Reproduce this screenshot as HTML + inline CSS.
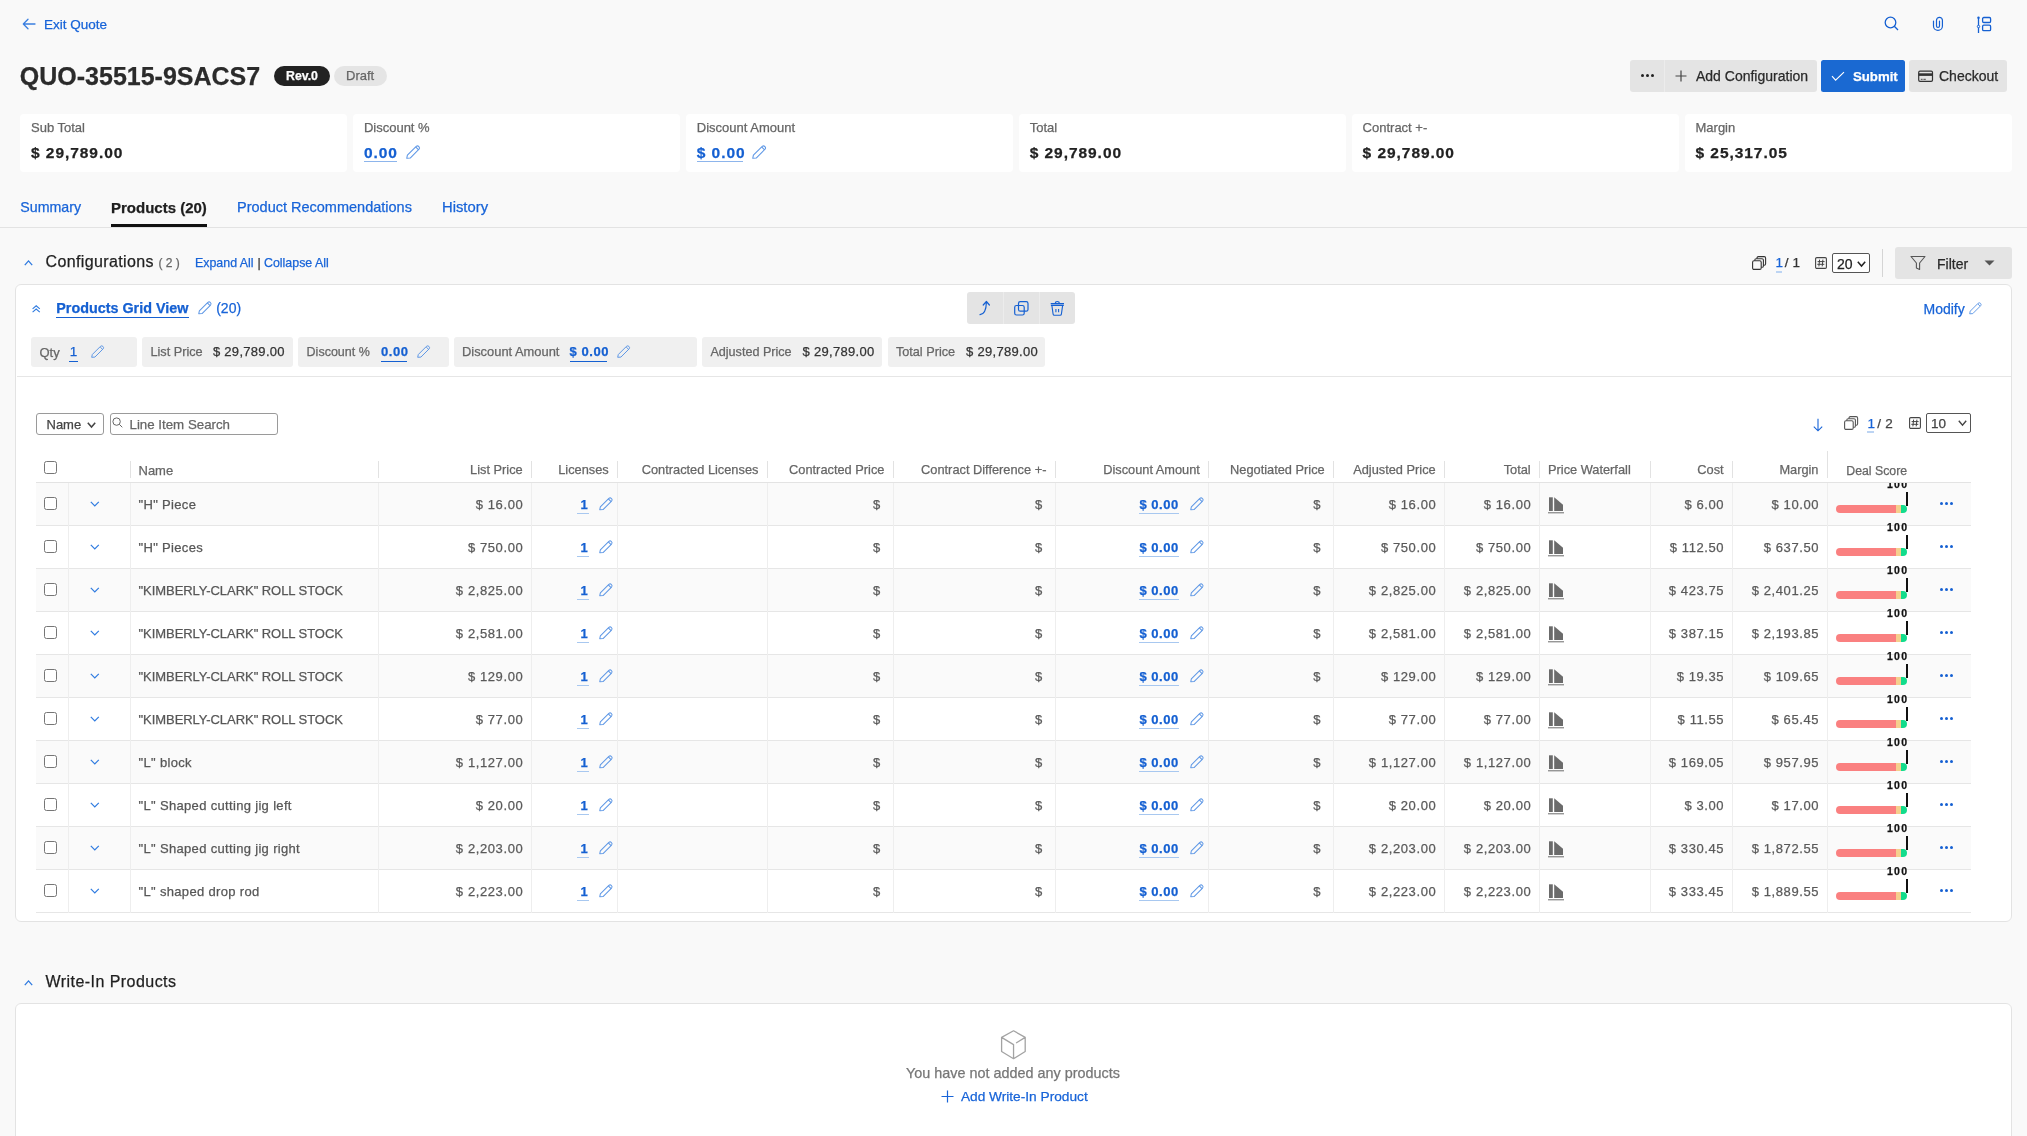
<!DOCTYPE html><html><head><meta charset="utf-8"><style>
html,body{margin:0;padding:0;}
body{width:2027px;height:1136px;overflow:hidden;background:#f9f9f9;position:relative;font-family:"Liberation Sans",sans-serif;}
.t{position:absolute;white-space:pre;line-height:1;-webkit-text-stroke:0.25px currentColor;}
#root{position:absolute;left:0;top:0;width:2027px;height:1136px;overflow:hidden;will-change:transform;}
.r{position:absolute;}
.i{position:absolute;overflow:visible;}
</style></head><body><div id="root">
<svg class="i" style="left:22.00px;top:18.00px;" width="14" height="12" viewBox="0 0 14 12"><path d="M13 6 H1.5 M6 1.3 L1.3 6 L6 10.7" fill="none" stroke="#3a7fe0" stroke-width="1.3" stroke-linecap="round" stroke-linejoin="round"/></svg>
<div class="t" style="left:44.00px;top:17.57px;font-size:13.5px;color:#1864d8;font-weight:400;">Exit Quote</div>
<svg class="i" style="left:1884.00px;top:16.00px;" width="16" height="16" viewBox="0 0 16 16"><circle cx="6.5" cy="6.5" r="5.3" fill="none" stroke="#1560d2" stroke-width="1.3"/><line x1="10.3" y1="10.3" x2="14" y2="14" stroke="#1560d2" stroke-width="1.3"/></svg>
<svg class="i" style="left:1928.00px;top:13.00px;" width="22" height="22" viewBox="0 0 22 22"><path d="M5.5 8.1 V12.95 A4.46 4.46 0 0 0 14.42 12.95 V7.3 A2.96 2.96 0 0 0 8.5 7.3 V12.9 A1.5 1.5 0 0 0 11.5 12.9 V8.1" fill="none" stroke="#1560d2" stroke-width="1.2" stroke-linecap="round"/></svg>
<svg class="i" style="left:1975.00px;top:16.00px;" width="18" height="18" viewBox="0 0 18 18"><line x1="3.5" y1="1.5" x2="3.5" y2="17" stroke="#1560d2" stroke-width="1.3"/><circle cx="3.5" cy="1.8" r="1.2" fill="#1560d2"/><circle cx="3.5" cy="10.5" r="1.2" fill="#f9f9f9" stroke="#1560d2" stroke-width="1"/><rect x="7.6" y="1.5" width="8" height="5" rx="1.2" fill="none" stroke="#1560d2" stroke-width="1.3"/><rect x="7.6" y="9.2" width="8" height="5.4" rx="1.2" fill="none" stroke="#1560d2" stroke-width="1.3"/></svg>
<div class="t" style="left:19.80px;top:64.34px;font-size:25px;color:#2b2b2b;font-weight:700;">QUO-35515-9SACS7</div>
<div class="r" style="left:274.00px;top:66.00px;width:56.00px;height:20.00px;background:#222;border-radius:10px"></div>
<div class="t" style="left:302.00px;top:69.99px;font-size:12.3px;color:#fff;font-weight:700;transform:translateX(-50%)">Rev.0</div>
<div class="r" style="left:334.00px;top:66.00px;width:53.00px;height:20.00px;background:#e5e5e5;border-radius:10px"></div>
<div class="t" style="left:346.00px;top:68.60px;font-size:13px;color:#666;font-weight:400;">Draft</div>
<div class="r" style="left:1630.30px;top:60.30px;width:186.50px;height:31.40px;background:#e4e4e4;border-radius:3px"></div>
<div class="r" style="left:1663.60px;top:60.30px;width:0.60px;height:31.40px;background:#ececec"></div>
<div class="r" style="left:1640.50px;top:74.30px;width:3.00px;height:3.00px;background:#222;border-radius:50%"></div>
<div class="r" style="left:1645.50px;top:74.30px;width:3.00px;height:3.00px;background:#222;border-radius:50%"></div>
<div class="r" style="left:1650.50px;top:74.30px;width:3.00px;height:3.00px;background:#222;border-radius:50%"></div>
<svg class="i" style="left:1675.00px;top:69.80px;" width="12" height="12" viewBox="0 0 12 12"><path d="M6 0.5 V11.5 M0.5 6 H11.5" stroke="#444" stroke-width="1.2"/></svg>
<div class="t" style="left:1696.00px;top:68.75px;font-size:14px;color:#2a2a2a;font-weight:400;">Add Configuration</div>
<div class="r" style="left:1821.30px;top:60.30px;width:83.50px;height:31.40px;background:#1a69d2;border-radius:2.5px"></div>
<svg class="i" style="left:1831.00px;top:71.00px;" width="14" height="11" viewBox="0 0 14 11"><polyline points="1,5.2 4.6,9.2 13,1.2" fill="none" stroke="#fff" stroke-width="1.15"/></svg>
<div class="t" style="left:1853.00px;top:69.83px;font-size:13.2px;color:#fff;font-weight:700;">Submit</div>
<div class="r" style="left:1909.00px;top:60.30px;width:97.80px;height:31.40px;background:#e4e4e4;border-radius:3px"></div>
<svg class="i" style="left:1917.00px;top:70.00px;" width="17" height="13" viewBox="0 0 17 13"><rect x="1.7" y="1.2" width="13.8" height="10.2" rx="1.3" fill="none" stroke="#333" stroke-width="1.2"/><rect x="1.7" y="3.3" width="13.8" height="2.6" fill="#333"/><line x1="3.8" y1="9.3" x2="5.6" y2="9.3" stroke="#333" stroke-width="0.9"/><line x1="6.4" y1="9.3" x2="8.8" y2="9.3" stroke="#333" stroke-width="0.9"/></svg>
<div class="t" style="left:1939.00px;top:68.75px;font-size:14px;color:#2a2a2a;font-weight:400;">Checkout</div>
<div class="r" style="left:20.00px;top:114.00px;width:327.40px;height:58.00px;background:#fff;border-radius:4px"></div>
<div class="t" style="left:31.00px;top:120.90px;font-size:13px;color:#666;font-weight:400;">Sub Total</div>
<div class="t" style="left:31.00px;top:145.48px;font-size:15.5px;color:#222;font-weight:700;letter-spacing:0.95px;">$ 29,789.00</div>
<div class="r" style="left:352.90px;top:114.00px;width:327.40px;height:58.00px;background:#fff;border-radius:4px"></div>
<div class="t" style="left:363.90px;top:120.90px;font-size:13px;color:#666;font-weight:400;">Discount %</div>
<div class="t" style="left:363.90px;top:145.48px;font-size:15.5px;color:#1560d2;font-weight:700;letter-spacing:0.95px;">0.00</div>
<div class="r" style="left:363.90px;top:161.00px;width:33.00px;height:1.00px;background:#8db5ec"></div>
<svg class="i" style="left:405.90px;top:145.00px;" width="14" height="14" viewBox="0 0 13 13"><path d="M0.7 12.3 L1.3 9.5 L9.5 1.3 A1.85 1.85 0 0 1 12.1 3.9 L3.9 12.1 Z M9.2 2.0 L11.4 4.2" fill="none" stroke="#5f98e6" stroke-width="1" stroke-linejoin="round"/></svg>
<div class="r" style="left:685.80px;top:114.00px;width:327.40px;height:58.00px;background:#fff;border-radius:4px"></div>
<div class="t" style="left:696.80px;top:120.90px;font-size:13px;color:#666;font-weight:400;">Discount Amount</div>
<div class="t" style="left:696.80px;top:145.48px;font-size:15.5px;color:#1560d2;font-weight:700;letter-spacing:0.95px;">$ 0.00</div>
<div class="r" style="left:696.80px;top:161.00px;width:46.00px;height:1.00px;background:#8db5ec"></div>
<svg class="i" style="left:751.80px;top:145.00px;" width="14" height="14" viewBox="0 0 13 13"><path d="M0.7 12.3 L1.3 9.5 L9.5 1.3 A1.85 1.85 0 0 1 12.1 3.9 L3.9 12.1 Z M9.2 2.0 L11.4 4.2" fill="none" stroke="#5f98e6" stroke-width="1" stroke-linejoin="round"/></svg>
<div class="r" style="left:1018.70px;top:114.00px;width:327.40px;height:58.00px;background:#fff;border-radius:4px"></div>
<div class="t" style="left:1029.70px;top:120.90px;font-size:13px;color:#666;font-weight:400;">Total</div>
<div class="t" style="left:1029.70px;top:145.48px;font-size:15.5px;color:#222;font-weight:700;letter-spacing:0.95px;">$ 29,789.00</div>
<div class="r" style="left:1351.60px;top:114.00px;width:327.40px;height:58.00px;background:#fff;border-radius:4px"></div>
<div class="t" style="left:1362.60px;top:120.90px;font-size:13px;color:#666;font-weight:400;">Contract +-</div>
<div class="t" style="left:1362.60px;top:145.48px;font-size:15.5px;color:#222;font-weight:700;letter-spacing:0.95px;">$ 29,789.00</div>
<div class="r" style="left:1684.50px;top:114.00px;width:327.40px;height:58.00px;background:#fff;border-radius:4px"></div>
<div class="t" style="left:1695.50px;top:120.90px;font-size:13px;color:#666;font-weight:400;">Margin</div>
<div class="t" style="left:1695.50px;top:145.48px;font-size:15.5px;color:#222;font-weight:700;letter-spacing:0.95px;">$ 25,317.05</div>
<div class="t" style="left:20.30px;top:200.08px;font-size:14.2px;color:#1864d8;font-weight:400;">Summary</div>
<div class="t" style="left:111.00px;top:199.90px;font-size:15px;color:#1f1f1f;font-weight:700;">Products (20)</div>
<div class="t" style="left:237.00px;top:200.33px;font-size:14.5px;color:#1864d8;font-weight:400;">Product Recommendations</div>
<div class="t" style="left:442.00px;top:200.07px;font-size:14.8px;color:#1864d8;font-weight:400;">History</div>
<div class="r" style="left:0.00px;top:227.00px;width:2027.00px;height:1.00px;background:#e3e3e3"></div>
<div class="r" style="left:111.00px;top:224.30px;width:96.00px;height:3.00px;background:#111"></div>
<svg class="i" style="left:23.80px;top:259.80px;" width="9" height="6" viewBox="0 0 9 6"><polyline points="0.8,5.2 4.5,0.9 8.2,5.2" fill="none" stroke="#2f7be0" stroke-width="1.3"/></svg>
<div class="t" style="left:45.50px;top:254.46px;font-size:16px;color:#1f1f1f;font-weight:400;letter-spacing:0.38px;">Configurations</div>
<div class="t" style="left:158.50px;top:257.24px;font-size:12px;color:#666;font-weight:400;">( 2 )</div>
<div class="t" style="left:195.00px;top:257.40px;font-size:12.4px;color:#1864d8;font-weight:400;">Expand All</div>
<div class="t" style="left:257.50px;top:257.40px;font-size:12.4px;color:#333;font-weight:400;">|</div>
<div class="t" style="left:264.00px;top:257.40px;font-size:12.4px;color:#1864d8;font-weight:400;">Collapse All</div>
<svg class="i" style="left:1752.00px;top:255.80px;" width="15" height="15" viewBox="0 0 15 15"><rect x="5.0" y="0.6" width="8.6" height="8.6" rx="1.4" fill="#f9f9f9" stroke="#333" stroke-width="1.1"/><rect x="2.8" y="2.7" width="8.6" height="8.6" rx="1.4" fill="#f9f9f9" stroke="#333" stroke-width="1.1"/><rect x="0.6" y="4.8" width="8.6" height="8.6" rx="1.4" fill="#f9f9f9" stroke="#333" stroke-width="1.1"/></svg>
<div class="t" style="left:1775.60px;top:256.47px;font-size:13.5px;color:#1864d8;font-weight:400;">1</div>
<div class="r" style="left:1775.60px;top:271.00px;width:6.00px;height:2.00px;background:#bcd4f3"></div>
<div class="t" style="left:1784.80px;top:256.47px;font-size:13.5px;color:#333;font-weight:400;">/</div>
<div class="t" style="left:1792.50px;top:256.47px;font-size:13.5px;color:#333;font-weight:400;">1</div>
<svg class="i" style="left:1814.50px;top:257.30px;" width="12" height="12" viewBox="0 0 12 12"><rect x="0.6" y="0.6" width="10.8" height="10.8" rx="1.2" fill="none" stroke="#444" stroke-width="1.1"/><path d="M4.6 2.6 L3.9 9.4 M7.9 2.6 L7.2 9.4 M2.6 4.6 H9.6 M2.3 7.3 H9.3" stroke="#444" stroke-width="1"/></svg>
<div class="r" style="left:1832.00px;top:253.00px;width:37.60px;height:19.60px;background:#fff;border:1px solid #555;border-radius:2px;box-sizing:border-box"></div>
<div class="t" style="left:1837.00px;top:256.65px;font-size:14px;color:#222;font-weight:400;">20</div>
<svg class="i" style="left:1857.00px;top:260.50px;" width="9" height="6" viewBox="0 0 9 6"><polyline points="0.8,0.8 4.5,5.1 8.2,0.8" fill="none" stroke="#222" stroke-width="1.5"/></svg>
<div class="r" style="left:1882.20px;top:249.00px;width:1.00px;height:28.00px;background:#d5d5d5"></div>
<div class="r" style="left:1895.00px;top:247.00px;width:117.00px;height:31.50px;background:#e4e4e4;border-radius:3px"></div>
<svg class="i" style="left:1909.50px;top:255.00px;" width="16" height="16" viewBox="0 0 16 16"><path d="M1 1.5 H15 L9.6 8 V14.5 L6.4 13 V8 Z" fill="none" stroke="#555" stroke-width="1.1" stroke-linejoin="round"/></svg>
<div class="t" style="left:1937.00px;top:256.65px;font-size:14px;color:#2a2a2a;font-weight:400;">Filter</div>
<svg class="i" style="left:1984.00px;top:260.00px;" width="11" height="6" viewBox="0 0 11 6"><polygon points="0.5,0.5 10.5,0.5 5.5,5.5" fill="#555"/></svg>
<div class="r" style="left:15.00px;top:283.50px;width:1996.50px;height:638.50px;background:#fff;border:1px solid #e3e3e3;border-radius:6px;box-sizing:border-box"></div>
<svg class="i" style="left:31.80px;top:304.80px;" width="8.4" height="7.8" viewBox="0 0 8.4 7.8"><polyline points="0.6,3.9 4.2,0.8 7.8,3.9" fill="none" stroke="#2f7be0" stroke-width="1.1"/><polyline points="0.6,7.2 4.2,4.1 7.8,7.2" fill="none" stroke="#2f7be0" stroke-width="1.1"/></svg>
<div class="t" style="left:56.30px;top:301.05px;font-size:14.35px;color:#1560d2;font-weight:700;">Products Grid View</div>
<div class="r" style="left:56.30px;top:316.80px;width:132.50px;height:1.50px;background:#1560d2"></div>
<svg class="i" style="left:198.00px;top:301.30px;" width="13.5" height="13.5" viewBox="0 0 13 13"><path d="M0.7 12.3 L1.3 9.5 L9.5 1.3 A1.85 1.85 0 0 1 12.1 3.9 L3.9 12.1 Z M9.2 2.0 L11.4 4.2" fill="none" stroke="#5f98e6" stroke-width="1" stroke-linejoin="round"/></svg>
<div class="t" style="left:216.20px;top:301.35px;font-size:14px;color:#1864d8;font-weight:400;">(20)</div>
<div class="r" style="left:967.20px;top:292.00px;width:107.70px;height:31.60px;background:#e4e4e4;border-radius:3px"></div>
<div class="r" style="left:1002.90px;top:292.00px;width:0.60px;height:31.60px;background:#ececec"></div>
<div class="r" style="left:1038.60px;top:292.00px;width:0.60px;height:31.60px;background:#ececec"></div>
<svg class="i" style="left:978.00px;top:300.00px;" width="14" height="16" viewBox="0 0 14 16"><path d="M2 14.6 C6.5 14.2 8.2 10.5 8.4 2.2 M5.2 5 L8.4 1.5 L11.4 5" fill="none" stroke="#1560d2" stroke-width="1.2" stroke-linecap="round" stroke-linejoin="round"/></svg>
<svg class="i" style="left:1013.50px;top:300.50px;" width="15" height="15" viewBox="0 0 15 15"><rect x="4.5" y="0.7" width="9.5" height="9.5" rx="1.8" fill="none" stroke="#1560d2" stroke-width="1.2"/><rect x="0.7" y="4.5" width="9.5" height="9.5" rx="1.8" fill="none" stroke="#1560d2" stroke-width="1.2"/></svg>
<svg class="i" style="left:1050.00px;top:300.50px;" width="15" height="15" viewBox="0 0 15 15"><path d="M0.7 2.6 H14 M0.9 4.4 H13.8 M5.1 2.5 Q5.3 0.5 7.3 0.5 Q9.3 0.5 9.5 2.5 M1.9 4.6 L3.1 13.1 a1.3 1.3 0 0 0 1.3 1.1 H10.1 a1.3 1.3 0 0 0 1.3 -1.1 L12.6 4.6 M5.9 8.1 V11.2 M8.6 8.1 V11.2" fill="none" stroke="#1560d2" stroke-width="1.1"/></svg>
<div class="t" style="left:1923.50px;top:301.65px;font-size:14px;color:#1864d8;font-weight:400;">Modify</div>
<svg class="i" style="left:1969.00px;top:301.50px;" width="12.5" height="12.5" viewBox="0 0 13 13"><path d="M0.7 12.3 L1.3 9.5 L9.5 1.3 A1.85 1.85 0 0 1 12.1 3.9 L3.9 12.1 Z M9.2 2.0 L11.4 4.2" fill="none" stroke="#5f98e6" stroke-width="1" stroke-linejoin="round"/></svg>
<div class="r" style="left:31.00px;top:337.00px;width:105.80px;height:29.80px;background:#f0f0f0;border-radius:3px"></div>
<div class="r" style="left:142.30px;top:337.00px;width:150.50px;height:29.80px;background:#f0f0f0;border-radius:3px"></div>
<div class="r" style="left:298.10px;top:337.00px;width:150.70px;height:29.80px;background:#f0f0f0;border-radius:3px"></div>
<div class="r" style="left:454.20px;top:337.00px;width:242.40px;height:29.80px;background:#f0f0f0;border-radius:3px"></div>
<div class="r" style="left:702.10px;top:337.00px;width:180.30px;height:29.80px;background:#f0f0f0;border-radius:3px"></div>
<div class="r" style="left:888.30px;top:337.00px;width:157.10px;height:29.80px;background:#f0f0f0;border-radius:3px"></div>
<div class="t" style="left:39.50px;top:345.70px;font-size:13px;color:#666;font-weight:400;">Qty</div>
<div class="t" style="left:69.80px;top:344.77px;font-size:13.5px;color:#1560d2;font-weight:400;">1</div>
<div class="r" style="left:69.00px;top:360.50px;width:8.50px;height:1.00px;background:#1560d2"></div>
<svg class="i" style="left:91.00px;top:345.00px;" width="13" height="13" viewBox="0 0 13 13"><path d="M0.7 12.3 L1.3 9.5 L9.5 1.3 A1.85 1.85 0 0 1 12.1 3.9 L3.9 12.1 Z M9.2 2.0 L11.4 4.2" fill="none" stroke="#5f98e6" stroke-width="1" stroke-linejoin="round"/></svg>
<div class="t" style="left:150.50px;top:345.95px;font-size:12.7px;color:#666;font-weight:400;">List Price</div>
<div class="t" style="left:212.90px;top:345.20px;font-size:13px;color:#333;font-weight:400;letter-spacing:0.3px;">$ 29,789.00</div>
<div class="t" style="left:306.60px;top:346.12px;font-size:12.5px;color:#666;font-weight:400;">Discount %</div>
<div class="t" style="left:381.00px;top:345.20px;font-size:13px;color:#1560d2;font-weight:700;letter-spacing:0.55px;">0.00</div>
<div class="r" style="left:381.00px;top:360.80px;width:26.30px;height:1.00px;background:#1560d2"></div>
<svg class="i" style="left:417.40px;top:345.00px;" width="13" height="13" viewBox="0 0 13 13"><path d="M0.7 12.3 L1.3 9.5 L9.5 1.3 A1.85 1.85 0 0 1 12.1 3.9 L3.9 12.1 Z M9.2 2.0 L11.4 4.2" fill="none" stroke="#5f98e6" stroke-width="1" stroke-linejoin="round"/></svg>
<div class="t" style="left:462.00px;top:345.78px;font-size:12.9px;color:#666;font-weight:400;">Discount Amount</div>
<div class="t" style="left:569.50px;top:345.20px;font-size:13px;color:#1560d2;font-weight:700;letter-spacing:0.55px;">$ 0.00</div>
<div class="r" style="left:569.50px;top:360.80px;width:37.00px;height:1.00px;background:#1560d2"></div>
<svg class="i" style="left:617.00px;top:345.00px;" width="13" height="13" viewBox="0 0 13 13"><path d="M0.7 12.3 L1.3 9.5 L9.5 1.3 A1.85 1.85 0 0 1 12.1 3.9 L3.9 12.1 Z M9.2 2.0 L11.4 4.2" fill="none" stroke="#5f98e6" stroke-width="1" stroke-linejoin="round"/></svg>
<div class="t" style="left:710.40px;top:346.03px;font-size:12.6px;color:#666;font-weight:400;">Adjusted Price</div>
<div class="t" style="left:802.60px;top:345.20px;font-size:13px;color:#333;font-weight:400;letter-spacing:0.3px;">$ 29,789.00</div>
<div class="t" style="left:895.90px;top:345.95px;font-size:12.7px;color:#666;font-weight:400;">Total Price</div>
<div class="t" style="left:966.00px;top:345.20px;font-size:13px;color:#333;font-weight:400;letter-spacing:0.3px;">$ 29,789.00</div>
<div class="r" style="left:16.50px;top:376.00px;width:1994.00px;height:1.00px;background:#e6e6e6"></div>
<div class="r" style="left:36.30px;top:413.20px;width:67.40px;height:21.40px;background:#fff;border:1px solid #9a9a9a;border-radius:3px;box-sizing:border-box"></div>
<div class="t" style="left:46.50px;top:417.80px;font-size:13px;color:#444;font-weight:400;">Name</div>
<svg class="i" style="left:86.80px;top:422.20px;" width="9" height="6" viewBox="0 0 9 6"><polyline points="0.8,0.8 4.5,5.1 8.2,0.8" fill="none" stroke="#444" stroke-width="1.5"/></svg>
<div class="r" style="left:110.20px;top:413.20px;width:167.40px;height:21.40px;background:#fff;border:1px solid #9a9a9a;border-radius:3px;box-sizing:border-box"></div>
<svg class="i" style="left:112.00px;top:416.50px;" width="11" height="11" viewBox="0 0 11 11"><circle cx="4.6" cy="4.6" r="3.7" fill="none" stroke="#666" stroke-width="1"/><line x1="7.3" y1="7.3" x2="10.3" y2="10.3" stroke="#666" stroke-width="1"/></svg>
<div class="t" style="left:129.50px;top:417.54px;font-size:13.3px;color:#666;font-weight:400;">Line Item Search</div>
<svg class="i" style="left:1811.50px;top:418.00px;" width="12" height="14" viewBox="0 0 12 14"><path d="M6 0.8 V12.6 M1.8 8.6 L6 12.8 L10.2 8.6" fill="none" stroke="#1864d8" stroke-width="1.1"/></svg>
<svg class="i" style="left:1844.30px;top:415.80px;" width="15" height="15" viewBox="0 0 15 15"><rect x="5.0" y="0.6" width="8.6" height="8.6" rx="1.4" fill="#fff" stroke="#555" stroke-width="1.1"/><rect x="2.8" y="2.7" width="8.6" height="8.6" rx="1.4" fill="#fff" stroke="#555" stroke-width="1.1"/><rect x="0.6" y="4.8" width="8.6" height="8.6" rx="1.4" fill="#fff" stroke="#555" stroke-width="1.1"/></svg>
<div class="t" style="left:1867.60px;top:416.87px;font-size:13.5px;color:#1864d8;font-weight:400;">1</div>
<div class="r" style="left:1867.20px;top:431.00px;width:6.60px;height:2.00px;background:#bcd4f3"></div>
<div class="t" style="left:1877.20px;top:416.87px;font-size:13.5px;color:#444;font-weight:400;">/</div>
<div class="t" style="left:1885.30px;top:416.87px;font-size:13.5px;color:#444;font-weight:400;">2</div>
<svg class="i" style="left:1908.50px;top:417.30px;" width="12" height="12" viewBox="0 0 12 12"><rect x="0.6" y="0.6" width="10.8" height="10.8" rx="1.2" fill="none" stroke="#444" stroke-width="1.1"/><path d="M4.6 2.6 L3.9 9.4 M7.9 2.6 L7.2 9.4 M2.6 4.6 H9.6 M2.3 7.3 H9.3" stroke="#444" stroke-width="1"/></svg>
<div class="r" style="left:1926.20px;top:413.00px;width:44.40px;height:19.70px;background:#fff;border:1px solid #555;border-radius:2px;box-sizing:border-box"></div>
<div class="t" style="left:1931.00px;top:416.57px;font-size:13.5px;color:#444;font-weight:400;">10</div>
<svg class="i" style="left:1957.50px;top:420.00px;" width="9" height="6" viewBox="0 0 9 6"><polyline points="0.8,0.8 4.5,5.1 8.2,0.8" fill="none" stroke="#444" stroke-width="1.4"/></svg>
<div class="r" style="left:44.00px;top:461.00px;width:13.00px;height:13.00px;background:#fff;border:1px solid #767676;border-radius:2.5px;box-sizing:border-box"></div>
<div class="r" style="left:130.00px;top:461.00px;width:1.00px;height:17.00px;background:#e2e2e2"></div>
<div class="r" style="left:378.00px;top:461.00px;width:1.00px;height:17.00px;background:#e2e2e2"></div>
<div class="r" style="left:531.20px;top:461.00px;width:1.00px;height:17.00px;background:#e2e2e2"></div>
<div class="r" style="left:617.20px;top:461.00px;width:1.00px;height:17.00px;background:#e2e2e2"></div>
<div class="r" style="left:766.90px;top:461.00px;width:1.00px;height:17.00px;background:#e2e2e2"></div>
<div class="r" style="left:892.90px;top:461.00px;width:1.00px;height:17.00px;background:#e2e2e2"></div>
<div class="r" style="left:1054.90px;top:461.00px;width:1.00px;height:17.00px;background:#e2e2e2"></div>
<div class="r" style="left:1208.40px;top:461.00px;width:1.00px;height:17.00px;background:#e2e2e2"></div>
<div class="r" style="left:1333.20px;top:461.00px;width:1.00px;height:17.00px;background:#e2e2e2"></div>
<div class="r" style="left:1444.20px;top:461.00px;width:1.00px;height:17.00px;background:#e2e2e2"></div>
<div class="r" style="left:1539.20px;top:461.00px;width:1.00px;height:17.00px;background:#e2e2e2"></div>
<div class="r" style="left:1650.00px;top:461.00px;width:1.00px;height:17.00px;background:#e2e2e2"></div>
<div class="r" style="left:1732.10px;top:461.00px;width:1.00px;height:17.00px;background:#e2e2e2"></div>
<div class="r" style="left:1827.00px;top:451.00px;width:1.00px;height:27.00px;background:#e2e2e2"></div>
<div class="t" style="left:138.50px;top:464.00px;font-size:13px;color:#666;font-weight:400;">Name</div>
<div class="t" style="right:1504.30px;top:464.16px;font-size:12.8px;color:#666;font-weight:400;">List Price</div>
<div class="t" style="right:1418.30px;top:464.16px;font-size:12.8px;color:#666;font-weight:400;">Licenses</div>
<div class="t" style="right:1268.60px;top:464.16px;font-size:12.8px;color:#666;font-weight:400;">Contracted Licenses</div>
<div class="t" style="right:1142.60px;top:464.16px;font-size:12.8px;color:#666;font-weight:400;">Contracted Price</div>
<div class="t" style="right:980.60px;top:464.16px;font-size:12.8px;color:#666;font-weight:400;">Contract Difference +-</div>
<div class="t" style="right:827.10px;top:464.16px;font-size:12.8px;color:#666;font-weight:400;">Discount Amount</div>
<div class="t" style="right:702.30px;top:464.16px;font-size:12.8px;color:#666;font-weight:400;">Negotiated Price</div>
<div class="t" style="right:591.30px;top:464.16px;font-size:12.8px;color:#666;font-weight:400;">Adjusted Price</div>
<div class="t" style="right:496.30px;top:464.16px;font-size:12.8px;color:#666;font-weight:400;">Total</div>
<div class="t" style="right:303.40px;top:464.16px;font-size:12.8px;color:#666;font-weight:400;">Cost</div>
<div class="t" style="right:208.50px;top:464.16px;font-size:12.8px;color:#666;font-weight:400;">Margin</div>
<div class="t" style="left:1548.00px;top:464.16px;font-size:12.8px;color:#666;font-weight:400;">Price Waterfall</div>
<div class="t" style="left:1846.30px;top:464.59px;font-size:12.3px;color:#666;font-weight:400;">Deal Score</div>
<div class="r" style="left:36.00px;top:481.80px;width:1934.70px;height:1.00px;background:#e3e3e3"></div>
<div class="r" style="left:0;top:482.8px;width:2027px;height:440px;overflow:hidden">
<div class="r" style="left:36.00px;top:-0.10px;width:1934.70px;height:43.00px;background:#fafafa"></div>
<div class="r" style="left:36.00px;top:42.20px;width:1934.70px;height:1.00px;background:#e6e6e6"></div>
<div class="r" style="left:68.00px;top:-0.10px;width:1.00px;height:43.00px;background:#eeeeee"></div>
<div class="r" style="left:130.00px;top:-0.10px;width:1.00px;height:43.00px;background:#eeeeee"></div>
<div class="r" style="left:378.00px;top:-0.10px;width:1.00px;height:43.00px;background:#eeeeee"></div>
<div class="r" style="left:531.20px;top:-0.10px;width:1.00px;height:43.00px;background:#eeeeee"></div>
<div class="r" style="left:617.20px;top:-0.10px;width:1.00px;height:43.00px;background:#eeeeee"></div>
<div class="r" style="left:766.90px;top:-0.10px;width:1.00px;height:43.00px;background:#eeeeee"></div>
<div class="r" style="left:892.90px;top:-0.10px;width:1.00px;height:43.00px;background:#eeeeee"></div>
<div class="r" style="left:1054.90px;top:-0.10px;width:1.00px;height:43.00px;background:#eeeeee"></div>
<div class="r" style="left:1208.40px;top:-0.10px;width:1.00px;height:43.00px;background:#eeeeee"></div>
<div class="r" style="left:1333.20px;top:-0.10px;width:1.00px;height:43.00px;background:#eeeeee"></div>
<div class="r" style="left:1444.20px;top:-0.10px;width:1.00px;height:43.00px;background:#eeeeee"></div>
<div class="r" style="left:1539.20px;top:-0.10px;width:1.00px;height:43.00px;background:#eeeeee"></div>
<div class="r" style="left:1650.00px;top:-0.10px;width:1.00px;height:43.00px;background:#eeeeee"></div>
<div class="r" style="left:1732.10px;top:-0.10px;width:1.00px;height:43.00px;background:#eeeeee"></div>
<div class="r" style="left:1827.00px;top:-0.10px;width:1.00px;height:43.00px;background:#eeeeee"></div>
<div class="r" style="left:44.00px;top:14.20px;width:13.00px;height:13.00px;background:#fff;border:1px solid #767676;border-radius:2.5px;box-sizing:border-box"></div>
<svg class="i" style="left:89.80px;top:18.10px;" width="9.6" height="5.8" viewBox="0 0 9.6 5.8"><polyline points="0.8,0.8 4.8,4.8999999999999995 8.799999999999999,0.8" fill="none" stroke="#2f7be0" stroke-width="1.2"/></svg>
<div class="t" style="left:138.50px;top:15.30px;font-size:13px;color:#575757;font-weight:400;letter-spacing:0.33px;">"H" Piece</div>
<div class="t" style="right:1503.70px;top:15.30px;font-size:13px;color:#5a5a5a;font-weight:400;letter-spacing:0.6px;">$ 16.00</div>
<div class="t" style="left:580.40px;top:15.30px;font-size:13px;color:#1560d2;font-weight:700;">1</div>
<div class="r" style="left:577.00px;top:30.70px;width:12.00px;height:1.00px;background:#a8c8f0"></div>
<svg class="i" style="left:598.80px;top:14.20px;" width="13.5" height="13.5" viewBox="0 0 13 13"><path d="M0.7 12.3 L1.3 9.5 L9.5 1.3 A1.85 1.85 0 0 1 12.1 3.9 L3.9 12.1 Z M9.2 2.0 L11.4 4.2" fill="none" stroke="#5f98e6" stroke-width="1" stroke-linejoin="round"/></svg>
<div class="t" style="right:1142.00px;top:15.30px;font-size:13px;color:#5a5a5a;font-weight:400;letter-spacing:0.6px;">$ </div>
<div class="t" style="right:980.00px;top:15.30px;font-size:13px;color:#5a5a5a;font-weight:400;letter-spacing:0.6px;">$ </div>
<div class="t" style="left:1139.40px;top:15.30px;font-size:13px;color:#1560d2;font-weight:700;letter-spacing:0.55px;">$ 0.00</div>
<div class="r" style="left:1139.40px;top:30.20px;width:40.10px;height:1.00px;background:#a8c8f0"></div>
<svg class="i" style="left:1190.00px;top:14.20px;" width="13.5" height="13.5" viewBox="0 0 13 13"><path d="M0.7 12.3 L1.3 9.5 L9.5 1.3 A1.85 1.85 0 0 1 12.1 3.9 L3.9 12.1 Z M9.2 2.0 L11.4 4.2" fill="none" stroke="#5f98e6" stroke-width="1" stroke-linejoin="round"/></svg>
<div class="t" style="right:701.70px;top:15.30px;font-size:13px;color:#5a5a5a;font-weight:400;letter-spacing:0.6px;">$ </div>
<div class="t" style="right:590.70px;top:15.30px;font-size:13px;color:#5a5a5a;font-weight:400;letter-spacing:0.6px;">$ 16.00</div>
<div class="t" style="right:495.70px;top:15.30px;font-size:13px;color:#5a5a5a;font-weight:400;letter-spacing:0.6px;">$ 16.00</div>
<svg class="i" style="left:1548.00px;top:13.90px;" width="17" height="17" viewBox="0 0 17 17"><rect x="1" y="0.3" width="3.8" height="13.7" fill="#6b6b6b"/><path d="M6.2 0.3 L15 7.8 V14 H6.2 Z" fill="#6b6b6b"/><rect x="0" y="15.3" width="16" height="1" fill="#6b6b6b"/></svg>
<div class="t" style="right:302.80px;top:15.30px;font-size:13px;color:#5a5a5a;font-weight:400;letter-spacing:0.6px;">$ 6.00</div>
<div class="t" style="right:207.90px;top:15.30px;font-size:13px;color:#5a5a5a;font-weight:400;letter-spacing:0.6px;">$ 10.00</div>
<div class="r" style="left:1836.00px;top:22.20px;width:71.00px;height:8.00px;background:linear-gradient(90deg,#fa8080 0,#fa8080 59.9px,#f5cf8d 59.9px,#f5cf8d 64.8px,#12dc8c 64.8px);border-radius:4px"></div>
<div class="r" style="left:1905.90px;top:9.30px;width:2.20px;height:13.90px;background:#111"></div>
<div class="t" style="right:118.80px;top:-3.49px;font-size:10.5px;color:#111;font-weight:700;letter-spacing:1.2px;">100</div>
<div class="r" style="left:1939.70px;top:19.60px;width:3.00px;height:3.00px;background:#1560d2;border-radius:50%"></div>
<div class="r" style="left:1944.80px;top:19.60px;width:3.00px;height:3.00px;background:#1560d2;border-radius:50%"></div>
<div class="r" style="left:1949.90px;top:19.60px;width:3.00px;height:3.00px;background:#1560d2;border-radius:50%"></div>
<div class="r" style="left:36.00px;top:85.20px;width:1934.70px;height:1.00px;background:#e6e6e6"></div>
<div class="r" style="left:68.00px;top:42.90px;width:1.00px;height:43.00px;background:#eeeeee"></div>
<div class="r" style="left:130.00px;top:42.90px;width:1.00px;height:43.00px;background:#eeeeee"></div>
<div class="r" style="left:378.00px;top:42.90px;width:1.00px;height:43.00px;background:#eeeeee"></div>
<div class="r" style="left:531.20px;top:42.90px;width:1.00px;height:43.00px;background:#eeeeee"></div>
<div class="r" style="left:617.20px;top:42.90px;width:1.00px;height:43.00px;background:#eeeeee"></div>
<div class="r" style="left:766.90px;top:42.90px;width:1.00px;height:43.00px;background:#eeeeee"></div>
<div class="r" style="left:892.90px;top:42.90px;width:1.00px;height:43.00px;background:#eeeeee"></div>
<div class="r" style="left:1054.90px;top:42.90px;width:1.00px;height:43.00px;background:#eeeeee"></div>
<div class="r" style="left:1208.40px;top:42.90px;width:1.00px;height:43.00px;background:#eeeeee"></div>
<div class="r" style="left:1333.20px;top:42.90px;width:1.00px;height:43.00px;background:#eeeeee"></div>
<div class="r" style="left:1444.20px;top:42.90px;width:1.00px;height:43.00px;background:#eeeeee"></div>
<div class="r" style="left:1539.20px;top:42.90px;width:1.00px;height:43.00px;background:#eeeeee"></div>
<div class="r" style="left:1650.00px;top:42.90px;width:1.00px;height:43.00px;background:#eeeeee"></div>
<div class="r" style="left:1732.10px;top:42.90px;width:1.00px;height:43.00px;background:#eeeeee"></div>
<div class="r" style="left:1827.00px;top:42.90px;width:1.00px;height:43.00px;background:#eeeeee"></div>
<div class="r" style="left:44.00px;top:57.20px;width:13.00px;height:13.00px;background:#fff;border:1px solid #767676;border-radius:2.5px;box-sizing:border-box"></div>
<svg class="i" style="left:89.80px;top:61.10px;" width="9.6" height="5.8" viewBox="0 0 9.6 5.8"><polyline points="0.8,0.8 4.8,4.8999999999999995 8.799999999999999,0.8" fill="none" stroke="#2f7be0" stroke-width="1.2"/></svg>
<div class="t" style="left:138.50px;top:58.30px;font-size:13px;color:#575757;font-weight:400;letter-spacing:0.33px;">"H" Pieces</div>
<div class="t" style="right:1503.70px;top:58.30px;font-size:13px;color:#5a5a5a;font-weight:400;letter-spacing:0.6px;">$ 750.00</div>
<div class="t" style="left:580.40px;top:58.30px;font-size:13px;color:#1560d2;font-weight:700;">1</div>
<div class="r" style="left:577.00px;top:73.70px;width:12.00px;height:1.00px;background:#a8c8f0"></div>
<svg class="i" style="left:598.80px;top:57.20px;" width="13.5" height="13.5" viewBox="0 0 13 13"><path d="M0.7 12.3 L1.3 9.5 L9.5 1.3 A1.85 1.85 0 0 1 12.1 3.9 L3.9 12.1 Z M9.2 2.0 L11.4 4.2" fill="none" stroke="#5f98e6" stroke-width="1" stroke-linejoin="round"/></svg>
<div class="t" style="right:1142.00px;top:58.30px;font-size:13px;color:#5a5a5a;font-weight:400;letter-spacing:0.6px;">$ </div>
<div class="t" style="right:980.00px;top:58.30px;font-size:13px;color:#5a5a5a;font-weight:400;letter-spacing:0.6px;">$ </div>
<div class="t" style="left:1139.40px;top:58.30px;font-size:13px;color:#1560d2;font-weight:700;letter-spacing:0.55px;">$ 0.00</div>
<div class="r" style="left:1139.40px;top:73.20px;width:40.10px;height:1.00px;background:#a8c8f0"></div>
<svg class="i" style="left:1190.00px;top:57.20px;" width="13.5" height="13.5" viewBox="0 0 13 13"><path d="M0.7 12.3 L1.3 9.5 L9.5 1.3 A1.85 1.85 0 0 1 12.1 3.9 L3.9 12.1 Z M9.2 2.0 L11.4 4.2" fill="none" stroke="#5f98e6" stroke-width="1" stroke-linejoin="round"/></svg>
<div class="t" style="right:701.70px;top:58.30px;font-size:13px;color:#5a5a5a;font-weight:400;letter-spacing:0.6px;">$ </div>
<div class="t" style="right:590.70px;top:58.30px;font-size:13px;color:#5a5a5a;font-weight:400;letter-spacing:0.6px;">$ 750.00</div>
<div class="t" style="right:495.70px;top:58.30px;font-size:13px;color:#5a5a5a;font-weight:400;letter-spacing:0.6px;">$ 750.00</div>
<svg class="i" style="left:1548.00px;top:56.90px;" width="17" height="17" viewBox="0 0 17 17"><rect x="1" y="0.3" width="3.8" height="13.7" fill="#6b6b6b"/><path d="M6.2 0.3 L15 7.8 V14 H6.2 Z" fill="#6b6b6b"/><rect x="0" y="15.3" width="16" height="1" fill="#6b6b6b"/></svg>
<div class="t" style="right:302.80px;top:58.30px;font-size:13px;color:#5a5a5a;font-weight:400;letter-spacing:0.6px;">$ 112.50</div>
<div class="t" style="right:207.90px;top:58.30px;font-size:13px;color:#5a5a5a;font-weight:400;letter-spacing:0.6px;">$ 637.50</div>
<div class="r" style="left:1836.00px;top:65.20px;width:71.00px;height:8.00px;background:linear-gradient(90deg,#fa8080 0,#fa8080 59.9px,#f5cf8d 59.9px,#f5cf8d 64.8px,#12dc8c 64.8px);border-radius:4px"></div>
<div class="r" style="left:1905.90px;top:52.30px;width:2.20px;height:13.90px;background:#111"></div>
<div class="t" style="right:118.80px;top:39.51px;font-size:10.5px;color:#111;font-weight:700;letter-spacing:1.2px;">100</div>
<div class="r" style="left:1939.70px;top:62.60px;width:3.00px;height:3.00px;background:#1560d2;border-radius:50%"></div>
<div class="r" style="left:1944.80px;top:62.60px;width:3.00px;height:3.00px;background:#1560d2;border-radius:50%"></div>
<div class="r" style="left:1949.90px;top:62.60px;width:3.00px;height:3.00px;background:#1560d2;border-radius:50%"></div>
<div class="r" style="left:36.00px;top:85.90px;width:1934.70px;height:43.00px;background:#fafafa"></div>
<div class="r" style="left:36.00px;top:128.20px;width:1934.70px;height:1.00px;background:#e6e6e6"></div>
<div class="r" style="left:68.00px;top:85.90px;width:1.00px;height:43.00px;background:#eeeeee"></div>
<div class="r" style="left:130.00px;top:85.90px;width:1.00px;height:43.00px;background:#eeeeee"></div>
<div class="r" style="left:378.00px;top:85.90px;width:1.00px;height:43.00px;background:#eeeeee"></div>
<div class="r" style="left:531.20px;top:85.90px;width:1.00px;height:43.00px;background:#eeeeee"></div>
<div class="r" style="left:617.20px;top:85.90px;width:1.00px;height:43.00px;background:#eeeeee"></div>
<div class="r" style="left:766.90px;top:85.90px;width:1.00px;height:43.00px;background:#eeeeee"></div>
<div class="r" style="left:892.90px;top:85.90px;width:1.00px;height:43.00px;background:#eeeeee"></div>
<div class="r" style="left:1054.90px;top:85.90px;width:1.00px;height:43.00px;background:#eeeeee"></div>
<div class="r" style="left:1208.40px;top:85.90px;width:1.00px;height:43.00px;background:#eeeeee"></div>
<div class="r" style="left:1333.20px;top:85.90px;width:1.00px;height:43.00px;background:#eeeeee"></div>
<div class="r" style="left:1444.20px;top:85.90px;width:1.00px;height:43.00px;background:#eeeeee"></div>
<div class="r" style="left:1539.20px;top:85.90px;width:1.00px;height:43.00px;background:#eeeeee"></div>
<div class="r" style="left:1650.00px;top:85.90px;width:1.00px;height:43.00px;background:#eeeeee"></div>
<div class="r" style="left:1732.10px;top:85.90px;width:1.00px;height:43.00px;background:#eeeeee"></div>
<div class="r" style="left:1827.00px;top:85.90px;width:1.00px;height:43.00px;background:#eeeeee"></div>
<div class="r" style="left:44.00px;top:100.20px;width:13.00px;height:13.00px;background:#fff;border:1px solid #767676;border-radius:2.5px;box-sizing:border-box"></div>
<svg class="i" style="left:89.80px;top:104.10px;" width="9.6" height="5.8" viewBox="0 0 9.6 5.8"><polyline points="0.8,0.8 4.8,4.8999999999999995 8.799999999999999,0.8" fill="none" stroke="#2f7be0" stroke-width="1.2"/></svg>
<div class="t" style="left:138.50px;top:101.30px;font-size:13px;color:#575757;font-weight:400;letter-spacing:-0.05px;">"KIMBERLY-CLARK" ROLL STOCK</div>
<div class="t" style="right:1503.70px;top:101.30px;font-size:13px;color:#5a5a5a;font-weight:400;letter-spacing:0.6px;">$ 2,825.00</div>
<div class="t" style="left:580.40px;top:101.30px;font-size:13px;color:#1560d2;font-weight:700;">1</div>
<div class="r" style="left:577.00px;top:116.70px;width:12.00px;height:1.00px;background:#a8c8f0"></div>
<svg class="i" style="left:598.80px;top:100.20px;" width="13.5" height="13.5" viewBox="0 0 13 13"><path d="M0.7 12.3 L1.3 9.5 L9.5 1.3 A1.85 1.85 0 0 1 12.1 3.9 L3.9 12.1 Z M9.2 2.0 L11.4 4.2" fill="none" stroke="#5f98e6" stroke-width="1" stroke-linejoin="round"/></svg>
<div class="t" style="right:1142.00px;top:101.30px;font-size:13px;color:#5a5a5a;font-weight:400;letter-spacing:0.6px;">$ </div>
<div class="t" style="right:980.00px;top:101.30px;font-size:13px;color:#5a5a5a;font-weight:400;letter-spacing:0.6px;">$ </div>
<div class="t" style="left:1139.40px;top:101.30px;font-size:13px;color:#1560d2;font-weight:700;letter-spacing:0.55px;">$ 0.00</div>
<div class="r" style="left:1139.40px;top:116.20px;width:40.10px;height:1.00px;background:#a8c8f0"></div>
<svg class="i" style="left:1190.00px;top:100.20px;" width="13.5" height="13.5" viewBox="0 0 13 13"><path d="M0.7 12.3 L1.3 9.5 L9.5 1.3 A1.85 1.85 0 0 1 12.1 3.9 L3.9 12.1 Z M9.2 2.0 L11.4 4.2" fill="none" stroke="#5f98e6" stroke-width="1" stroke-linejoin="round"/></svg>
<div class="t" style="right:701.70px;top:101.30px;font-size:13px;color:#5a5a5a;font-weight:400;letter-spacing:0.6px;">$ </div>
<div class="t" style="right:590.70px;top:101.30px;font-size:13px;color:#5a5a5a;font-weight:400;letter-spacing:0.6px;">$ 2,825.00</div>
<div class="t" style="right:495.70px;top:101.30px;font-size:13px;color:#5a5a5a;font-weight:400;letter-spacing:0.6px;">$ 2,825.00</div>
<svg class="i" style="left:1548.00px;top:99.90px;" width="17" height="17" viewBox="0 0 17 17"><rect x="1" y="0.3" width="3.8" height="13.7" fill="#6b6b6b"/><path d="M6.2 0.3 L15 7.8 V14 H6.2 Z" fill="#6b6b6b"/><rect x="0" y="15.3" width="16" height="1" fill="#6b6b6b"/></svg>
<div class="t" style="right:302.80px;top:101.30px;font-size:13px;color:#5a5a5a;font-weight:400;letter-spacing:0.6px;">$ 423.75</div>
<div class="t" style="right:207.90px;top:101.30px;font-size:13px;color:#5a5a5a;font-weight:400;letter-spacing:0.6px;">$ 2,401.25</div>
<div class="r" style="left:1836.00px;top:108.20px;width:71.00px;height:8.00px;background:linear-gradient(90deg,#fa8080 0,#fa8080 59.9px,#f5cf8d 59.9px,#f5cf8d 64.8px,#12dc8c 64.8px);border-radius:4px"></div>
<div class="r" style="left:1905.90px;top:95.30px;width:2.20px;height:13.90px;background:#111"></div>
<div class="t" style="right:118.80px;top:82.51px;font-size:10.5px;color:#111;font-weight:700;letter-spacing:1.2px;">100</div>
<div class="r" style="left:1939.70px;top:105.60px;width:3.00px;height:3.00px;background:#1560d2;border-radius:50%"></div>
<div class="r" style="left:1944.80px;top:105.60px;width:3.00px;height:3.00px;background:#1560d2;border-radius:50%"></div>
<div class="r" style="left:1949.90px;top:105.60px;width:3.00px;height:3.00px;background:#1560d2;border-radius:50%"></div>
<div class="r" style="left:36.00px;top:171.20px;width:1934.70px;height:1.00px;background:#e6e6e6"></div>
<div class="r" style="left:68.00px;top:128.90px;width:1.00px;height:43.00px;background:#eeeeee"></div>
<div class="r" style="left:130.00px;top:128.90px;width:1.00px;height:43.00px;background:#eeeeee"></div>
<div class="r" style="left:378.00px;top:128.90px;width:1.00px;height:43.00px;background:#eeeeee"></div>
<div class="r" style="left:531.20px;top:128.90px;width:1.00px;height:43.00px;background:#eeeeee"></div>
<div class="r" style="left:617.20px;top:128.90px;width:1.00px;height:43.00px;background:#eeeeee"></div>
<div class="r" style="left:766.90px;top:128.90px;width:1.00px;height:43.00px;background:#eeeeee"></div>
<div class="r" style="left:892.90px;top:128.90px;width:1.00px;height:43.00px;background:#eeeeee"></div>
<div class="r" style="left:1054.90px;top:128.90px;width:1.00px;height:43.00px;background:#eeeeee"></div>
<div class="r" style="left:1208.40px;top:128.90px;width:1.00px;height:43.00px;background:#eeeeee"></div>
<div class="r" style="left:1333.20px;top:128.90px;width:1.00px;height:43.00px;background:#eeeeee"></div>
<div class="r" style="left:1444.20px;top:128.90px;width:1.00px;height:43.00px;background:#eeeeee"></div>
<div class="r" style="left:1539.20px;top:128.90px;width:1.00px;height:43.00px;background:#eeeeee"></div>
<div class="r" style="left:1650.00px;top:128.90px;width:1.00px;height:43.00px;background:#eeeeee"></div>
<div class="r" style="left:1732.10px;top:128.90px;width:1.00px;height:43.00px;background:#eeeeee"></div>
<div class="r" style="left:1827.00px;top:128.90px;width:1.00px;height:43.00px;background:#eeeeee"></div>
<div class="r" style="left:44.00px;top:143.20px;width:13.00px;height:13.00px;background:#fff;border:1px solid #767676;border-radius:2.5px;box-sizing:border-box"></div>
<svg class="i" style="left:89.80px;top:147.10px;" width="9.6" height="5.8" viewBox="0 0 9.6 5.8"><polyline points="0.8,0.8 4.8,4.8999999999999995 8.799999999999999,0.8" fill="none" stroke="#2f7be0" stroke-width="1.2"/></svg>
<div class="t" style="left:138.50px;top:144.30px;font-size:13px;color:#575757;font-weight:400;letter-spacing:-0.05px;">"KIMBERLY-CLARK" ROLL STOCK</div>
<div class="t" style="right:1503.70px;top:144.30px;font-size:13px;color:#5a5a5a;font-weight:400;letter-spacing:0.6px;">$ 2,581.00</div>
<div class="t" style="left:580.40px;top:144.30px;font-size:13px;color:#1560d2;font-weight:700;">1</div>
<div class="r" style="left:577.00px;top:159.70px;width:12.00px;height:1.00px;background:#a8c8f0"></div>
<svg class="i" style="left:598.80px;top:143.20px;" width="13.5" height="13.5" viewBox="0 0 13 13"><path d="M0.7 12.3 L1.3 9.5 L9.5 1.3 A1.85 1.85 0 0 1 12.1 3.9 L3.9 12.1 Z M9.2 2.0 L11.4 4.2" fill="none" stroke="#5f98e6" stroke-width="1" stroke-linejoin="round"/></svg>
<div class="t" style="right:1142.00px;top:144.30px;font-size:13px;color:#5a5a5a;font-weight:400;letter-spacing:0.6px;">$ </div>
<div class="t" style="right:980.00px;top:144.30px;font-size:13px;color:#5a5a5a;font-weight:400;letter-spacing:0.6px;">$ </div>
<div class="t" style="left:1139.40px;top:144.30px;font-size:13px;color:#1560d2;font-weight:700;letter-spacing:0.55px;">$ 0.00</div>
<div class="r" style="left:1139.40px;top:159.20px;width:40.10px;height:1.00px;background:#a8c8f0"></div>
<svg class="i" style="left:1190.00px;top:143.20px;" width="13.5" height="13.5" viewBox="0 0 13 13"><path d="M0.7 12.3 L1.3 9.5 L9.5 1.3 A1.85 1.85 0 0 1 12.1 3.9 L3.9 12.1 Z M9.2 2.0 L11.4 4.2" fill="none" stroke="#5f98e6" stroke-width="1" stroke-linejoin="round"/></svg>
<div class="t" style="right:701.70px;top:144.30px;font-size:13px;color:#5a5a5a;font-weight:400;letter-spacing:0.6px;">$ </div>
<div class="t" style="right:590.70px;top:144.30px;font-size:13px;color:#5a5a5a;font-weight:400;letter-spacing:0.6px;">$ 2,581.00</div>
<div class="t" style="right:495.70px;top:144.30px;font-size:13px;color:#5a5a5a;font-weight:400;letter-spacing:0.6px;">$ 2,581.00</div>
<svg class="i" style="left:1548.00px;top:142.90px;" width="17" height="17" viewBox="0 0 17 17"><rect x="1" y="0.3" width="3.8" height="13.7" fill="#6b6b6b"/><path d="M6.2 0.3 L15 7.8 V14 H6.2 Z" fill="#6b6b6b"/><rect x="0" y="15.3" width="16" height="1" fill="#6b6b6b"/></svg>
<div class="t" style="right:302.80px;top:144.30px;font-size:13px;color:#5a5a5a;font-weight:400;letter-spacing:0.6px;">$ 387.15</div>
<div class="t" style="right:207.90px;top:144.30px;font-size:13px;color:#5a5a5a;font-weight:400;letter-spacing:0.6px;">$ 2,193.85</div>
<div class="r" style="left:1836.00px;top:151.20px;width:71.00px;height:8.00px;background:linear-gradient(90deg,#fa8080 0,#fa8080 59.9px,#f5cf8d 59.9px,#f5cf8d 64.8px,#12dc8c 64.8px);border-radius:4px"></div>
<div class="r" style="left:1905.90px;top:138.30px;width:2.20px;height:13.90px;background:#111"></div>
<div class="t" style="right:118.80px;top:125.51px;font-size:10.5px;color:#111;font-weight:700;letter-spacing:1.2px;">100</div>
<div class="r" style="left:1939.70px;top:148.60px;width:3.00px;height:3.00px;background:#1560d2;border-radius:50%"></div>
<div class="r" style="left:1944.80px;top:148.60px;width:3.00px;height:3.00px;background:#1560d2;border-radius:50%"></div>
<div class="r" style="left:1949.90px;top:148.60px;width:3.00px;height:3.00px;background:#1560d2;border-radius:50%"></div>
<div class="r" style="left:36.00px;top:171.90px;width:1934.70px;height:43.00px;background:#fafafa"></div>
<div class="r" style="left:36.00px;top:214.20px;width:1934.70px;height:1.00px;background:#e6e6e6"></div>
<div class="r" style="left:68.00px;top:171.90px;width:1.00px;height:43.00px;background:#eeeeee"></div>
<div class="r" style="left:130.00px;top:171.90px;width:1.00px;height:43.00px;background:#eeeeee"></div>
<div class="r" style="left:378.00px;top:171.90px;width:1.00px;height:43.00px;background:#eeeeee"></div>
<div class="r" style="left:531.20px;top:171.90px;width:1.00px;height:43.00px;background:#eeeeee"></div>
<div class="r" style="left:617.20px;top:171.90px;width:1.00px;height:43.00px;background:#eeeeee"></div>
<div class="r" style="left:766.90px;top:171.90px;width:1.00px;height:43.00px;background:#eeeeee"></div>
<div class="r" style="left:892.90px;top:171.90px;width:1.00px;height:43.00px;background:#eeeeee"></div>
<div class="r" style="left:1054.90px;top:171.90px;width:1.00px;height:43.00px;background:#eeeeee"></div>
<div class="r" style="left:1208.40px;top:171.90px;width:1.00px;height:43.00px;background:#eeeeee"></div>
<div class="r" style="left:1333.20px;top:171.90px;width:1.00px;height:43.00px;background:#eeeeee"></div>
<div class="r" style="left:1444.20px;top:171.90px;width:1.00px;height:43.00px;background:#eeeeee"></div>
<div class="r" style="left:1539.20px;top:171.90px;width:1.00px;height:43.00px;background:#eeeeee"></div>
<div class="r" style="left:1650.00px;top:171.90px;width:1.00px;height:43.00px;background:#eeeeee"></div>
<div class="r" style="left:1732.10px;top:171.90px;width:1.00px;height:43.00px;background:#eeeeee"></div>
<div class="r" style="left:1827.00px;top:171.90px;width:1.00px;height:43.00px;background:#eeeeee"></div>
<div class="r" style="left:44.00px;top:186.20px;width:13.00px;height:13.00px;background:#fff;border:1px solid #767676;border-radius:2.5px;box-sizing:border-box"></div>
<svg class="i" style="left:89.80px;top:190.10px;" width="9.6" height="5.8" viewBox="0 0 9.6 5.8"><polyline points="0.8,0.8 4.8,4.8999999999999995 8.799999999999999,0.8" fill="none" stroke="#2f7be0" stroke-width="1.2"/></svg>
<div class="t" style="left:138.50px;top:187.30px;font-size:13px;color:#575757;font-weight:400;letter-spacing:-0.05px;">"KIMBERLY-CLARK" ROLL STOCK</div>
<div class="t" style="right:1503.70px;top:187.30px;font-size:13px;color:#5a5a5a;font-weight:400;letter-spacing:0.6px;">$ 129.00</div>
<div class="t" style="left:580.40px;top:187.30px;font-size:13px;color:#1560d2;font-weight:700;">1</div>
<div class="r" style="left:577.00px;top:202.70px;width:12.00px;height:1.00px;background:#a8c8f0"></div>
<svg class="i" style="left:598.80px;top:186.20px;" width="13.5" height="13.5" viewBox="0 0 13 13"><path d="M0.7 12.3 L1.3 9.5 L9.5 1.3 A1.85 1.85 0 0 1 12.1 3.9 L3.9 12.1 Z M9.2 2.0 L11.4 4.2" fill="none" stroke="#5f98e6" stroke-width="1" stroke-linejoin="round"/></svg>
<div class="t" style="right:1142.00px;top:187.30px;font-size:13px;color:#5a5a5a;font-weight:400;letter-spacing:0.6px;">$ </div>
<div class="t" style="right:980.00px;top:187.30px;font-size:13px;color:#5a5a5a;font-weight:400;letter-spacing:0.6px;">$ </div>
<div class="t" style="left:1139.40px;top:187.30px;font-size:13px;color:#1560d2;font-weight:700;letter-spacing:0.55px;">$ 0.00</div>
<div class="r" style="left:1139.40px;top:202.20px;width:40.10px;height:1.00px;background:#a8c8f0"></div>
<svg class="i" style="left:1190.00px;top:186.20px;" width="13.5" height="13.5" viewBox="0 0 13 13"><path d="M0.7 12.3 L1.3 9.5 L9.5 1.3 A1.85 1.85 0 0 1 12.1 3.9 L3.9 12.1 Z M9.2 2.0 L11.4 4.2" fill="none" stroke="#5f98e6" stroke-width="1" stroke-linejoin="round"/></svg>
<div class="t" style="right:701.70px;top:187.30px;font-size:13px;color:#5a5a5a;font-weight:400;letter-spacing:0.6px;">$ </div>
<div class="t" style="right:590.70px;top:187.30px;font-size:13px;color:#5a5a5a;font-weight:400;letter-spacing:0.6px;">$ 129.00</div>
<div class="t" style="right:495.70px;top:187.30px;font-size:13px;color:#5a5a5a;font-weight:400;letter-spacing:0.6px;">$ 129.00</div>
<svg class="i" style="left:1548.00px;top:185.90px;" width="17" height="17" viewBox="0 0 17 17"><rect x="1" y="0.3" width="3.8" height="13.7" fill="#6b6b6b"/><path d="M6.2 0.3 L15 7.8 V14 H6.2 Z" fill="#6b6b6b"/><rect x="0" y="15.3" width="16" height="1" fill="#6b6b6b"/></svg>
<div class="t" style="right:302.80px;top:187.30px;font-size:13px;color:#5a5a5a;font-weight:400;letter-spacing:0.6px;">$ 19.35</div>
<div class="t" style="right:207.90px;top:187.30px;font-size:13px;color:#5a5a5a;font-weight:400;letter-spacing:0.6px;">$ 109.65</div>
<div class="r" style="left:1836.00px;top:194.20px;width:71.00px;height:8.00px;background:linear-gradient(90deg,#fa8080 0,#fa8080 59.9px,#f5cf8d 59.9px,#f5cf8d 64.8px,#12dc8c 64.8px);border-radius:4px"></div>
<div class="r" style="left:1905.90px;top:181.30px;width:2.20px;height:13.90px;background:#111"></div>
<div class="t" style="right:118.80px;top:168.51px;font-size:10.5px;color:#111;font-weight:700;letter-spacing:1.2px;">100</div>
<div class="r" style="left:1939.70px;top:191.60px;width:3.00px;height:3.00px;background:#1560d2;border-radius:50%"></div>
<div class="r" style="left:1944.80px;top:191.60px;width:3.00px;height:3.00px;background:#1560d2;border-radius:50%"></div>
<div class="r" style="left:1949.90px;top:191.60px;width:3.00px;height:3.00px;background:#1560d2;border-radius:50%"></div>
<div class="r" style="left:36.00px;top:257.20px;width:1934.70px;height:1.00px;background:#e6e6e6"></div>
<div class="r" style="left:68.00px;top:214.90px;width:1.00px;height:43.00px;background:#eeeeee"></div>
<div class="r" style="left:130.00px;top:214.90px;width:1.00px;height:43.00px;background:#eeeeee"></div>
<div class="r" style="left:378.00px;top:214.90px;width:1.00px;height:43.00px;background:#eeeeee"></div>
<div class="r" style="left:531.20px;top:214.90px;width:1.00px;height:43.00px;background:#eeeeee"></div>
<div class="r" style="left:617.20px;top:214.90px;width:1.00px;height:43.00px;background:#eeeeee"></div>
<div class="r" style="left:766.90px;top:214.90px;width:1.00px;height:43.00px;background:#eeeeee"></div>
<div class="r" style="left:892.90px;top:214.90px;width:1.00px;height:43.00px;background:#eeeeee"></div>
<div class="r" style="left:1054.90px;top:214.90px;width:1.00px;height:43.00px;background:#eeeeee"></div>
<div class="r" style="left:1208.40px;top:214.90px;width:1.00px;height:43.00px;background:#eeeeee"></div>
<div class="r" style="left:1333.20px;top:214.90px;width:1.00px;height:43.00px;background:#eeeeee"></div>
<div class="r" style="left:1444.20px;top:214.90px;width:1.00px;height:43.00px;background:#eeeeee"></div>
<div class="r" style="left:1539.20px;top:214.90px;width:1.00px;height:43.00px;background:#eeeeee"></div>
<div class="r" style="left:1650.00px;top:214.90px;width:1.00px;height:43.00px;background:#eeeeee"></div>
<div class="r" style="left:1732.10px;top:214.90px;width:1.00px;height:43.00px;background:#eeeeee"></div>
<div class="r" style="left:1827.00px;top:214.90px;width:1.00px;height:43.00px;background:#eeeeee"></div>
<div class="r" style="left:44.00px;top:229.20px;width:13.00px;height:13.00px;background:#fff;border:1px solid #767676;border-radius:2.5px;box-sizing:border-box"></div>
<svg class="i" style="left:89.80px;top:233.10px;" width="9.6" height="5.8" viewBox="0 0 9.6 5.8"><polyline points="0.8,0.8 4.8,4.8999999999999995 8.799999999999999,0.8" fill="none" stroke="#2f7be0" stroke-width="1.2"/></svg>
<div class="t" style="left:138.50px;top:230.30px;font-size:13px;color:#575757;font-weight:400;letter-spacing:-0.05px;">"KIMBERLY-CLARK" ROLL STOCK</div>
<div class="t" style="right:1503.70px;top:230.30px;font-size:13px;color:#5a5a5a;font-weight:400;letter-spacing:0.6px;">$ 77.00</div>
<div class="t" style="left:580.40px;top:230.30px;font-size:13px;color:#1560d2;font-weight:700;">1</div>
<div class="r" style="left:577.00px;top:245.70px;width:12.00px;height:1.00px;background:#a8c8f0"></div>
<svg class="i" style="left:598.80px;top:229.20px;" width="13.5" height="13.5" viewBox="0 0 13 13"><path d="M0.7 12.3 L1.3 9.5 L9.5 1.3 A1.85 1.85 0 0 1 12.1 3.9 L3.9 12.1 Z M9.2 2.0 L11.4 4.2" fill="none" stroke="#5f98e6" stroke-width="1" stroke-linejoin="round"/></svg>
<div class="t" style="right:1142.00px;top:230.30px;font-size:13px;color:#5a5a5a;font-weight:400;letter-spacing:0.6px;">$ </div>
<div class="t" style="right:980.00px;top:230.30px;font-size:13px;color:#5a5a5a;font-weight:400;letter-spacing:0.6px;">$ </div>
<div class="t" style="left:1139.40px;top:230.30px;font-size:13px;color:#1560d2;font-weight:700;letter-spacing:0.55px;">$ 0.00</div>
<div class="r" style="left:1139.40px;top:245.20px;width:40.10px;height:1.00px;background:#a8c8f0"></div>
<svg class="i" style="left:1190.00px;top:229.20px;" width="13.5" height="13.5" viewBox="0 0 13 13"><path d="M0.7 12.3 L1.3 9.5 L9.5 1.3 A1.85 1.85 0 0 1 12.1 3.9 L3.9 12.1 Z M9.2 2.0 L11.4 4.2" fill="none" stroke="#5f98e6" stroke-width="1" stroke-linejoin="round"/></svg>
<div class="t" style="right:701.70px;top:230.30px;font-size:13px;color:#5a5a5a;font-weight:400;letter-spacing:0.6px;">$ </div>
<div class="t" style="right:590.70px;top:230.30px;font-size:13px;color:#5a5a5a;font-weight:400;letter-spacing:0.6px;">$ 77.00</div>
<div class="t" style="right:495.70px;top:230.30px;font-size:13px;color:#5a5a5a;font-weight:400;letter-spacing:0.6px;">$ 77.00</div>
<svg class="i" style="left:1548.00px;top:228.90px;" width="17" height="17" viewBox="0 0 17 17"><rect x="1" y="0.3" width="3.8" height="13.7" fill="#6b6b6b"/><path d="M6.2 0.3 L15 7.8 V14 H6.2 Z" fill="#6b6b6b"/><rect x="0" y="15.3" width="16" height="1" fill="#6b6b6b"/></svg>
<div class="t" style="right:302.80px;top:230.30px;font-size:13px;color:#5a5a5a;font-weight:400;letter-spacing:0.6px;">$ 11.55</div>
<div class="t" style="right:207.90px;top:230.30px;font-size:13px;color:#5a5a5a;font-weight:400;letter-spacing:0.6px;">$ 65.45</div>
<div class="r" style="left:1836.00px;top:237.20px;width:71.00px;height:8.00px;background:linear-gradient(90deg,#fa8080 0,#fa8080 59.9px,#f5cf8d 59.9px,#f5cf8d 64.8px,#12dc8c 64.8px);border-radius:4px"></div>
<div class="r" style="left:1905.90px;top:224.30px;width:2.20px;height:13.90px;background:#111"></div>
<div class="t" style="right:118.80px;top:211.51px;font-size:10.5px;color:#111;font-weight:700;letter-spacing:1.2px;">100</div>
<div class="r" style="left:1939.70px;top:234.60px;width:3.00px;height:3.00px;background:#1560d2;border-radius:50%"></div>
<div class="r" style="left:1944.80px;top:234.60px;width:3.00px;height:3.00px;background:#1560d2;border-radius:50%"></div>
<div class="r" style="left:1949.90px;top:234.60px;width:3.00px;height:3.00px;background:#1560d2;border-radius:50%"></div>
<div class="r" style="left:36.00px;top:257.90px;width:1934.70px;height:43.00px;background:#fafafa"></div>
<div class="r" style="left:36.00px;top:300.20px;width:1934.70px;height:1.00px;background:#e6e6e6"></div>
<div class="r" style="left:68.00px;top:257.90px;width:1.00px;height:43.00px;background:#eeeeee"></div>
<div class="r" style="left:130.00px;top:257.90px;width:1.00px;height:43.00px;background:#eeeeee"></div>
<div class="r" style="left:378.00px;top:257.90px;width:1.00px;height:43.00px;background:#eeeeee"></div>
<div class="r" style="left:531.20px;top:257.90px;width:1.00px;height:43.00px;background:#eeeeee"></div>
<div class="r" style="left:617.20px;top:257.90px;width:1.00px;height:43.00px;background:#eeeeee"></div>
<div class="r" style="left:766.90px;top:257.90px;width:1.00px;height:43.00px;background:#eeeeee"></div>
<div class="r" style="left:892.90px;top:257.90px;width:1.00px;height:43.00px;background:#eeeeee"></div>
<div class="r" style="left:1054.90px;top:257.90px;width:1.00px;height:43.00px;background:#eeeeee"></div>
<div class="r" style="left:1208.40px;top:257.90px;width:1.00px;height:43.00px;background:#eeeeee"></div>
<div class="r" style="left:1333.20px;top:257.90px;width:1.00px;height:43.00px;background:#eeeeee"></div>
<div class="r" style="left:1444.20px;top:257.90px;width:1.00px;height:43.00px;background:#eeeeee"></div>
<div class="r" style="left:1539.20px;top:257.90px;width:1.00px;height:43.00px;background:#eeeeee"></div>
<div class="r" style="left:1650.00px;top:257.90px;width:1.00px;height:43.00px;background:#eeeeee"></div>
<div class="r" style="left:1732.10px;top:257.90px;width:1.00px;height:43.00px;background:#eeeeee"></div>
<div class="r" style="left:1827.00px;top:257.90px;width:1.00px;height:43.00px;background:#eeeeee"></div>
<div class="r" style="left:44.00px;top:272.20px;width:13.00px;height:13.00px;background:#fff;border:1px solid #767676;border-radius:2.5px;box-sizing:border-box"></div>
<svg class="i" style="left:89.80px;top:276.10px;" width="9.6" height="5.8" viewBox="0 0 9.6 5.8"><polyline points="0.8,0.8 4.8,4.8999999999999995 8.799999999999999,0.8" fill="none" stroke="#2f7be0" stroke-width="1.2"/></svg>
<div class="t" style="left:138.50px;top:273.30px;font-size:13px;color:#575757;font-weight:400;letter-spacing:0.33px;">"L" block</div>
<div class="t" style="right:1503.70px;top:273.30px;font-size:13px;color:#5a5a5a;font-weight:400;letter-spacing:0.6px;">$ 1,127.00</div>
<div class="t" style="left:580.40px;top:273.30px;font-size:13px;color:#1560d2;font-weight:700;">1</div>
<div class="r" style="left:577.00px;top:288.70px;width:12.00px;height:1.00px;background:#a8c8f0"></div>
<svg class="i" style="left:598.80px;top:272.20px;" width="13.5" height="13.5" viewBox="0 0 13 13"><path d="M0.7 12.3 L1.3 9.5 L9.5 1.3 A1.85 1.85 0 0 1 12.1 3.9 L3.9 12.1 Z M9.2 2.0 L11.4 4.2" fill="none" stroke="#5f98e6" stroke-width="1" stroke-linejoin="round"/></svg>
<div class="t" style="right:1142.00px;top:273.30px;font-size:13px;color:#5a5a5a;font-weight:400;letter-spacing:0.6px;">$ </div>
<div class="t" style="right:980.00px;top:273.30px;font-size:13px;color:#5a5a5a;font-weight:400;letter-spacing:0.6px;">$ </div>
<div class="t" style="left:1139.40px;top:273.30px;font-size:13px;color:#1560d2;font-weight:700;letter-spacing:0.55px;">$ 0.00</div>
<div class="r" style="left:1139.40px;top:288.20px;width:40.10px;height:1.00px;background:#a8c8f0"></div>
<svg class="i" style="left:1190.00px;top:272.20px;" width="13.5" height="13.5" viewBox="0 0 13 13"><path d="M0.7 12.3 L1.3 9.5 L9.5 1.3 A1.85 1.85 0 0 1 12.1 3.9 L3.9 12.1 Z M9.2 2.0 L11.4 4.2" fill="none" stroke="#5f98e6" stroke-width="1" stroke-linejoin="round"/></svg>
<div class="t" style="right:701.70px;top:273.30px;font-size:13px;color:#5a5a5a;font-weight:400;letter-spacing:0.6px;">$ </div>
<div class="t" style="right:590.70px;top:273.30px;font-size:13px;color:#5a5a5a;font-weight:400;letter-spacing:0.6px;">$ 1,127.00</div>
<div class="t" style="right:495.70px;top:273.30px;font-size:13px;color:#5a5a5a;font-weight:400;letter-spacing:0.6px;">$ 1,127.00</div>
<svg class="i" style="left:1548.00px;top:271.90px;" width="17" height="17" viewBox="0 0 17 17"><rect x="1" y="0.3" width="3.8" height="13.7" fill="#6b6b6b"/><path d="M6.2 0.3 L15 7.8 V14 H6.2 Z" fill="#6b6b6b"/><rect x="0" y="15.3" width="16" height="1" fill="#6b6b6b"/></svg>
<div class="t" style="right:302.80px;top:273.30px;font-size:13px;color:#5a5a5a;font-weight:400;letter-spacing:0.6px;">$ 169.05</div>
<div class="t" style="right:207.90px;top:273.30px;font-size:13px;color:#5a5a5a;font-weight:400;letter-spacing:0.6px;">$ 957.95</div>
<div class="r" style="left:1836.00px;top:280.20px;width:71.00px;height:8.00px;background:linear-gradient(90deg,#fa8080 0,#fa8080 59.9px,#f5cf8d 59.9px,#f5cf8d 64.8px,#12dc8c 64.8px);border-radius:4px"></div>
<div class="r" style="left:1905.90px;top:267.30px;width:2.20px;height:13.90px;background:#111"></div>
<div class="t" style="right:118.80px;top:254.51px;font-size:10.5px;color:#111;font-weight:700;letter-spacing:1.2px;">100</div>
<div class="r" style="left:1939.70px;top:277.60px;width:3.00px;height:3.00px;background:#1560d2;border-radius:50%"></div>
<div class="r" style="left:1944.80px;top:277.60px;width:3.00px;height:3.00px;background:#1560d2;border-radius:50%"></div>
<div class="r" style="left:1949.90px;top:277.60px;width:3.00px;height:3.00px;background:#1560d2;border-radius:50%"></div>
<div class="r" style="left:36.00px;top:343.20px;width:1934.70px;height:1.00px;background:#e6e6e6"></div>
<div class="r" style="left:68.00px;top:300.90px;width:1.00px;height:43.00px;background:#eeeeee"></div>
<div class="r" style="left:130.00px;top:300.90px;width:1.00px;height:43.00px;background:#eeeeee"></div>
<div class="r" style="left:378.00px;top:300.90px;width:1.00px;height:43.00px;background:#eeeeee"></div>
<div class="r" style="left:531.20px;top:300.90px;width:1.00px;height:43.00px;background:#eeeeee"></div>
<div class="r" style="left:617.20px;top:300.90px;width:1.00px;height:43.00px;background:#eeeeee"></div>
<div class="r" style="left:766.90px;top:300.90px;width:1.00px;height:43.00px;background:#eeeeee"></div>
<div class="r" style="left:892.90px;top:300.90px;width:1.00px;height:43.00px;background:#eeeeee"></div>
<div class="r" style="left:1054.90px;top:300.90px;width:1.00px;height:43.00px;background:#eeeeee"></div>
<div class="r" style="left:1208.40px;top:300.90px;width:1.00px;height:43.00px;background:#eeeeee"></div>
<div class="r" style="left:1333.20px;top:300.90px;width:1.00px;height:43.00px;background:#eeeeee"></div>
<div class="r" style="left:1444.20px;top:300.90px;width:1.00px;height:43.00px;background:#eeeeee"></div>
<div class="r" style="left:1539.20px;top:300.90px;width:1.00px;height:43.00px;background:#eeeeee"></div>
<div class="r" style="left:1650.00px;top:300.90px;width:1.00px;height:43.00px;background:#eeeeee"></div>
<div class="r" style="left:1732.10px;top:300.90px;width:1.00px;height:43.00px;background:#eeeeee"></div>
<div class="r" style="left:1827.00px;top:300.90px;width:1.00px;height:43.00px;background:#eeeeee"></div>
<div class="r" style="left:44.00px;top:315.20px;width:13.00px;height:13.00px;background:#fff;border:1px solid #767676;border-radius:2.5px;box-sizing:border-box"></div>
<svg class="i" style="left:89.80px;top:319.10px;" width="9.6" height="5.8" viewBox="0 0 9.6 5.8"><polyline points="0.8,0.8 4.8,4.8999999999999995 8.799999999999999,0.8" fill="none" stroke="#2f7be0" stroke-width="1.2"/></svg>
<div class="t" style="left:138.50px;top:316.30px;font-size:13px;color:#575757;font-weight:400;letter-spacing:0.33px;">"L" Shaped cutting jig left</div>
<div class="t" style="right:1503.70px;top:316.30px;font-size:13px;color:#5a5a5a;font-weight:400;letter-spacing:0.6px;">$ 20.00</div>
<div class="t" style="left:580.40px;top:316.30px;font-size:13px;color:#1560d2;font-weight:700;">1</div>
<div class="r" style="left:577.00px;top:331.70px;width:12.00px;height:1.00px;background:#a8c8f0"></div>
<svg class="i" style="left:598.80px;top:315.20px;" width="13.5" height="13.5" viewBox="0 0 13 13"><path d="M0.7 12.3 L1.3 9.5 L9.5 1.3 A1.85 1.85 0 0 1 12.1 3.9 L3.9 12.1 Z M9.2 2.0 L11.4 4.2" fill="none" stroke="#5f98e6" stroke-width="1" stroke-linejoin="round"/></svg>
<div class="t" style="right:1142.00px;top:316.30px;font-size:13px;color:#5a5a5a;font-weight:400;letter-spacing:0.6px;">$ </div>
<div class="t" style="right:980.00px;top:316.30px;font-size:13px;color:#5a5a5a;font-weight:400;letter-spacing:0.6px;">$ </div>
<div class="t" style="left:1139.40px;top:316.30px;font-size:13px;color:#1560d2;font-weight:700;letter-spacing:0.55px;">$ 0.00</div>
<div class="r" style="left:1139.40px;top:331.20px;width:40.10px;height:1.00px;background:#a8c8f0"></div>
<svg class="i" style="left:1190.00px;top:315.20px;" width="13.5" height="13.5" viewBox="0 0 13 13"><path d="M0.7 12.3 L1.3 9.5 L9.5 1.3 A1.85 1.85 0 0 1 12.1 3.9 L3.9 12.1 Z M9.2 2.0 L11.4 4.2" fill="none" stroke="#5f98e6" stroke-width="1" stroke-linejoin="round"/></svg>
<div class="t" style="right:701.70px;top:316.30px;font-size:13px;color:#5a5a5a;font-weight:400;letter-spacing:0.6px;">$ </div>
<div class="t" style="right:590.70px;top:316.30px;font-size:13px;color:#5a5a5a;font-weight:400;letter-spacing:0.6px;">$ 20.00</div>
<div class="t" style="right:495.70px;top:316.30px;font-size:13px;color:#5a5a5a;font-weight:400;letter-spacing:0.6px;">$ 20.00</div>
<svg class="i" style="left:1548.00px;top:314.90px;" width="17" height="17" viewBox="0 0 17 17"><rect x="1" y="0.3" width="3.8" height="13.7" fill="#6b6b6b"/><path d="M6.2 0.3 L15 7.8 V14 H6.2 Z" fill="#6b6b6b"/><rect x="0" y="15.3" width="16" height="1" fill="#6b6b6b"/></svg>
<div class="t" style="right:302.80px;top:316.30px;font-size:13px;color:#5a5a5a;font-weight:400;letter-spacing:0.6px;">$ 3.00</div>
<div class="t" style="right:207.90px;top:316.30px;font-size:13px;color:#5a5a5a;font-weight:400;letter-spacing:0.6px;">$ 17.00</div>
<div class="r" style="left:1836.00px;top:323.20px;width:71.00px;height:8.00px;background:linear-gradient(90deg,#fa8080 0,#fa8080 59.9px,#f5cf8d 59.9px,#f5cf8d 64.8px,#12dc8c 64.8px);border-radius:4px"></div>
<div class="r" style="left:1905.90px;top:310.30px;width:2.20px;height:13.90px;background:#111"></div>
<div class="t" style="right:118.80px;top:297.51px;font-size:10.5px;color:#111;font-weight:700;letter-spacing:1.2px;">100</div>
<div class="r" style="left:1939.70px;top:320.60px;width:3.00px;height:3.00px;background:#1560d2;border-radius:50%"></div>
<div class="r" style="left:1944.80px;top:320.60px;width:3.00px;height:3.00px;background:#1560d2;border-radius:50%"></div>
<div class="r" style="left:1949.90px;top:320.60px;width:3.00px;height:3.00px;background:#1560d2;border-radius:50%"></div>
<div class="r" style="left:36.00px;top:343.90px;width:1934.70px;height:43.00px;background:#fafafa"></div>
<div class="r" style="left:36.00px;top:386.20px;width:1934.70px;height:1.00px;background:#e6e6e6"></div>
<div class="r" style="left:68.00px;top:343.90px;width:1.00px;height:43.00px;background:#eeeeee"></div>
<div class="r" style="left:130.00px;top:343.90px;width:1.00px;height:43.00px;background:#eeeeee"></div>
<div class="r" style="left:378.00px;top:343.90px;width:1.00px;height:43.00px;background:#eeeeee"></div>
<div class="r" style="left:531.20px;top:343.90px;width:1.00px;height:43.00px;background:#eeeeee"></div>
<div class="r" style="left:617.20px;top:343.90px;width:1.00px;height:43.00px;background:#eeeeee"></div>
<div class="r" style="left:766.90px;top:343.90px;width:1.00px;height:43.00px;background:#eeeeee"></div>
<div class="r" style="left:892.90px;top:343.90px;width:1.00px;height:43.00px;background:#eeeeee"></div>
<div class="r" style="left:1054.90px;top:343.90px;width:1.00px;height:43.00px;background:#eeeeee"></div>
<div class="r" style="left:1208.40px;top:343.90px;width:1.00px;height:43.00px;background:#eeeeee"></div>
<div class="r" style="left:1333.20px;top:343.90px;width:1.00px;height:43.00px;background:#eeeeee"></div>
<div class="r" style="left:1444.20px;top:343.90px;width:1.00px;height:43.00px;background:#eeeeee"></div>
<div class="r" style="left:1539.20px;top:343.90px;width:1.00px;height:43.00px;background:#eeeeee"></div>
<div class="r" style="left:1650.00px;top:343.90px;width:1.00px;height:43.00px;background:#eeeeee"></div>
<div class="r" style="left:1732.10px;top:343.90px;width:1.00px;height:43.00px;background:#eeeeee"></div>
<div class="r" style="left:1827.00px;top:343.90px;width:1.00px;height:43.00px;background:#eeeeee"></div>
<div class="r" style="left:44.00px;top:358.20px;width:13.00px;height:13.00px;background:#fff;border:1px solid #767676;border-radius:2.5px;box-sizing:border-box"></div>
<svg class="i" style="left:89.80px;top:362.10px;" width="9.6" height="5.8" viewBox="0 0 9.6 5.8"><polyline points="0.8,0.8 4.8,4.8999999999999995 8.799999999999999,0.8" fill="none" stroke="#2f7be0" stroke-width="1.2"/></svg>
<div class="t" style="left:138.50px;top:359.30px;font-size:13px;color:#575757;font-weight:400;letter-spacing:0.33px;">"L" Shaped cutting jig right</div>
<div class="t" style="right:1503.70px;top:359.30px;font-size:13px;color:#5a5a5a;font-weight:400;letter-spacing:0.6px;">$ 2,203.00</div>
<div class="t" style="left:580.40px;top:359.30px;font-size:13px;color:#1560d2;font-weight:700;">1</div>
<div class="r" style="left:577.00px;top:374.70px;width:12.00px;height:1.00px;background:#a8c8f0"></div>
<svg class="i" style="left:598.80px;top:358.20px;" width="13.5" height="13.5" viewBox="0 0 13 13"><path d="M0.7 12.3 L1.3 9.5 L9.5 1.3 A1.85 1.85 0 0 1 12.1 3.9 L3.9 12.1 Z M9.2 2.0 L11.4 4.2" fill="none" stroke="#5f98e6" stroke-width="1" stroke-linejoin="round"/></svg>
<div class="t" style="right:1142.00px;top:359.30px;font-size:13px;color:#5a5a5a;font-weight:400;letter-spacing:0.6px;">$ </div>
<div class="t" style="right:980.00px;top:359.30px;font-size:13px;color:#5a5a5a;font-weight:400;letter-spacing:0.6px;">$ </div>
<div class="t" style="left:1139.40px;top:359.30px;font-size:13px;color:#1560d2;font-weight:700;letter-spacing:0.55px;">$ 0.00</div>
<div class="r" style="left:1139.40px;top:374.20px;width:40.10px;height:1.00px;background:#a8c8f0"></div>
<svg class="i" style="left:1190.00px;top:358.20px;" width="13.5" height="13.5" viewBox="0 0 13 13"><path d="M0.7 12.3 L1.3 9.5 L9.5 1.3 A1.85 1.85 0 0 1 12.1 3.9 L3.9 12.1 Z M9.2 2.0 L11.4 4.2" fill="none" stroke="#5f98e6" stroke-width="1" stroke-linejoin="round"/></svg>
<div class="t" style="right:701.70px;top:359.30px;font-size:13px;color:#5a5a5a;font-weight:400;letter-spacing:0.6px;">$ </div>
<div class="t" style="right:590.70px;top:359.30px;font-size:13px;color:#5a5a5a;font-weight:400;letter-spacing:0.6px;">$ 2,203.00</div>
<div class="t" style="right:495.70px;top:359.30px;font-size:13px;color:#5a5a5a;font-weight:400;letter-spacing:0.6px;">$ 2,203.00</div>
<svg class="i" style="left:1548.00px;top:357.90px;" width="17" height="17" viewBox="0 0 17 17"><rect x="1" y="0.3" width="3.8" height="13.7" fill="#6b6b6b"/><path d="M6.2 0.3 L15 7.8 V14 H6.2 Z" fill="#6b6b6b"/><rect x="0" y="15.3" width="16" height="1" fill="#6b6b6b"/></svg>
<div class="t" style="right:302.80px;top:359.30px;font-size:13px;color:#5a5a5a;font-weight:400;letter-spacing:0.6px;">$ 330.45</div>
<div class="t" style="right:207.90px;top:359.30px;font-size:13px;color:#5a5a5a;font-weight:400;letter-spacing:0.6px;">$ 1,872.55</div>
<div class="r" style="left:1836.00px;top:366.20px;width:71.00px;height:8.00px;background:linear-gradient(90deg,#fa8080 0,#fa8080 59.9px,#f5cf8d 59.9px,#f5cf8d 64.8px,#12dc8c 64.8px);border-radius:4px"></div>
<div class="r" style="left:1905.90px;top:353.30px;width:2.20px;height:13.90px;background:#111"></div>
<div class="t" style="right:118.80px;top:340.51px;font-size:10.5px;color:#111;font-weight:700;letter-spacing:1.2px;">100</div>
<div class="r" style="left:1939.70px;top:363.60px;width:3.00px;height:3.00px;background:#1560d2;border-radius:50%"></div>
<div class="r" style="left:1944.80px;top:363.60px;width:3.00px;height:3.00px;background:#1560d2;border-radius:50%"></div>
<div class="r" style="left:1949.90px;top:363.60px;width:3.00px;height:3.00px;background:#1560d2;border-radius:50%"></div>
<div class="r" style="left:36.00px;top:429.20px;width:1934.70px;height:1.00px;background:#e6e6e6"></div>
<div class="r" style="left:68.00px;top:386.90px;width:1.00px;height:43.00px;background:#eeeeee"></div>
<div class="r" style="left:130.00px;top:386.90px;width:1.00px;height:43.00px;background:#eeeeee"></div>
<div class="r" style="left:378.00px;top:386.90px;width:1.00px;height:43.00px;background:#eeeeee"></div>
<div class="r" style="left:531.20px;top:386.90px;width:1.00px;height:43.00px;background:#eeeeee"></div>
<div class="r" style="left:617.20px;top:386.90px;width:1.00px;height:43.00px;background:#eeeeee"></div>
<div class="r" style="left:766.90px;top:386.90px;width:1.00px;height:43.00px;background:#eeeeee"></div>
<div class="r" style="left:892.90px;top:386.90px;width:1.00px;height:43.00px;background:#eeeeee"></div>
<div class="r" style="left:1054.90px;top:386.90px;width:1.00px;height:43.00px;background:#eeeeee"></div>
<div class="r" style="left:1208.40px;top:386.90px;width:1.00px;height:43.00px;background:#eeeeee"></div>
<div class="r" style="left:1333.20px;top:386.90px;width:1.00px;height:43.00px;background:#eeeeee"></div>
<div class="r" style="left:1444.20px;top:386.90px;width:1.00px;height:43.00px;background:#eeeeee"></div>
<div class="r" style="left:1539.20px;top:386.90px;width:1.00px;height:43.00px;background:#eeeeee"></div>
<div class="r" style="left:1650.00px;top:386.90px;width:1.00px;height:43.00px;background:#eeeeee"></div>
<div class="r" style="left:1732.10px;top:386.90px;width:1.00px;height:43.00px;background:#eeeeee"></div>
<div class="r" style="left:1827.00px;top:386.90px;width:1.00px;height:43.00px;background:#eeeeee"></div>
<div class="r" style="left:44.00px;top:401.20px;width:13.00px;height:13.00px;background:#fff;border:1px solid #767676;border-radius:2.5px;box-sizing:border-box"></div>
<svg class="i" style="left:89.80px;top:405.10px;" width="9.6" height="5.8" viewBox="0 0 9.6 5.8"><polyline points="0.8,0.8 4.8,4.8999999999999995 8.799999999999999,0.8" fill="none" stroke="#2f7be0" stroke-width="1.2"/></svg>
<div class="t" style="left:138.50px;top:402.30px;font-size:13px;color:#575757;font-weight:400;letter-spacing:0.33px;">"L" shaped drop rod</div>
<div class="t" style="right:1503.70px;top:402.30px;font-size:13px;color:#5a5a5a;font-weight:400;letter-spacing:0.6px;">$ 2,223.00</div>
<div class="t" style="left:580.40px;top:402.30px;font-size:13px;color:#1560d2;font-weight:700;">1</div>
<div class="r" style="left:577.00px;top:417.70px;width:12.00px;height:1.00px;background:#a8c8f0"></div>
<svg class="i" style="left:598.80px;top:401.20px;" width="13.5" height="13.5" viewBox="0 0 13 13"><path d="M0.7 12.3 L1.3 9.5 L9.5 1.3 A1.85 1.85 0 0 1 12.1 3.9 L3.9 12.1 Z M9.2 2.0 L11.4 4.2" fill="none" stroke="#5f98e6" stroke-width="1" stroke-linejoin="round"/></svg>
<div class="t" style="right:1142.00px;top:402.30px;font-size:13px;color:#5a5a5a;font-weight:400;letter-spacing:0.6px;">$ </div>
<div class="t" style="right:980.00px;top:402.30px;font-size:13px;color:#5a5a5a;font-weight:400;letter-spacing:0.6px;">$ </div>
<div class="t" style="left:1139.40px;top:402.30px;font-size:13px;color:#1560d2;font-weight:700;letter-spacing:0.55px;">$ 0.00</div>
<div class="r" style="left:1139.40px;top:417.20px;width:40.10px;height:1.00px;background:#a8c8f0"></div>
<svg class="i" style="left:1190.00px;top:401.20px;" width="13.5" height="13.5" viewBox="0 0 13 13"><path d="M0.7 12.3 L1.3 9.5 L9.5 1.3 A1.85 1.85 0 0 1 12.1 3.9 L3.9 12.1 Z M9.2 2.0 L11.4 4.2" fill="none" stroke="#5f98e6" stroke-width="1" stroke-linejoin="round"/></svg>
<div class="t" style="right:701.70px;top:402.30px;font-size:13px;color:#5a5a5a;font-weight:400;letter-spacing:0.6px;">$ </div>
<div class="t" style="right:590.70px;top:402.30px;font-size:13px;color:#5a5a5a;font-weight:400;letter-spacing:0.6px;">$ 2,223.00</div>
<div class="t" style="right:495.70px;top:402.30px;font-size:13px;color:#5a5a5a;font-weight:400;letter-spacing:0.6px;">$ 2,223.00</div>
<svg class="i" style="left:1548.00px;top:400.90px;" width="17" height="17" viewBox="0 0 17 17"><rect x="1" y="0.3" width="3.8" height="13.7" fill="#6b6b6b"/><path d="M6.2 0.3 L15 7.8 V14 H6.2 Z" fill="#6b6b6b"/><rect x="0" y="15.3" width="16" height="1" fill="#6b6b6b"/></svg>
<div class="t" style="right:302.80px;top:402.30px;font-size:13px;color:#5a5a5a;font-weight:400;letter-spacing:0.6px;">$ 333.45</div>
<div class="t" style="right:207.90px;top:402.30px;font-size:13px;color:#5a5a5a;font-weight:400;letter-spacing:0.6px;">$ 1,889.55</div>
<div class="r" style="left:1836.00px;top:409.20px;width:71.00px;height:8.00px;background:linear-gradient(90deg,#fa8080 0,#fa8080 59.9px,#f5cf8d 59.9px,#f5cf8d 64.8px,#12dc8c 64.8px);border-radius:4px"></div>
<div class="r" style="left:1905.90px;top:396.30px;width:2.20px;height:13.90px;background:#111"></div>
<div class="t" style="right:118.80px;top:383.51px;font-size:10.5px;color:#111;font-weight:700;letter-spacing:1.2px;">100</div>
<div class="r" style="left:1939.70px;top:406.60px;width:3.00px;height:3.00px;background:#1560d2;border-radius:50%"></div>
<div class="r" style="left:1944.80px;top:406.60px;width:3.00px;height:3.00px;background:#1560d2;border-radius:50%"></div>
<div class="r" style="left:1949.90px;top:406.60px;width:3.00px;height:3.00px;background:#1560d2;border-radius:50%"></div>
</div>
<svg class="i" style="left:23.50px;top:979.80px;" width="9" height="6" viewBox="0 0 9 6"><polyline points="0.8,5.2 4.5,0.9 8.2,5.2" fill="none" stroke="#2f7be0" stroke-width="1.3"/></svg>
<div class="t" style="left:45.50px;top:974.46px;font-size:16px;color:#1f1f1f;font-weight:400;letter-spacing:0.45px;">Write-In Products</div>
<div class="r" style="left:15.00px;top:1002.50px;width:1996.50px;height:157.50px;background:#fff;border:1px solid #e3e3e3;border-radius:6px;box-sizing:border-box"></div>
<svg class="i" style="left:995.00px;top:1025.00px;" width="37" height="39" viewBox="0 0 37 39"><path d="M18.55 5.8 L30.2 12.4 V26.5 L18.55 33.7 L6.6 26.5 V12.4 Z M6.6 12.4 L18.55 19.6 V33.7 M30.2 12.4 L21.5 17.7" fill="none" stroke="#a3a3a3" stroke-width="1.3" stroke-linejoin="round" stroke-linecap="round"/></svg>
<div class="t" style="left:906.00px;top:1065.81px;font-size:14.4px;color:#777;font-weight:400;">You have not added any products</div>
<svg class="i" style="left:941.00px;top:1090.00px;" width="13" height="13" viewBox="0 0 13 13"><path d="M6.5 0.5 V12.5 M0.5 6.5 H12.5" stroke="#1864d8" stroke-width="1.2"/></svg>
<div class="t" style="left:960.90px;top:1090.00px;font-size:13.7px;color:#1864d8;font-weight:400;">Add Write-In Product</div>
</div></body></html>
